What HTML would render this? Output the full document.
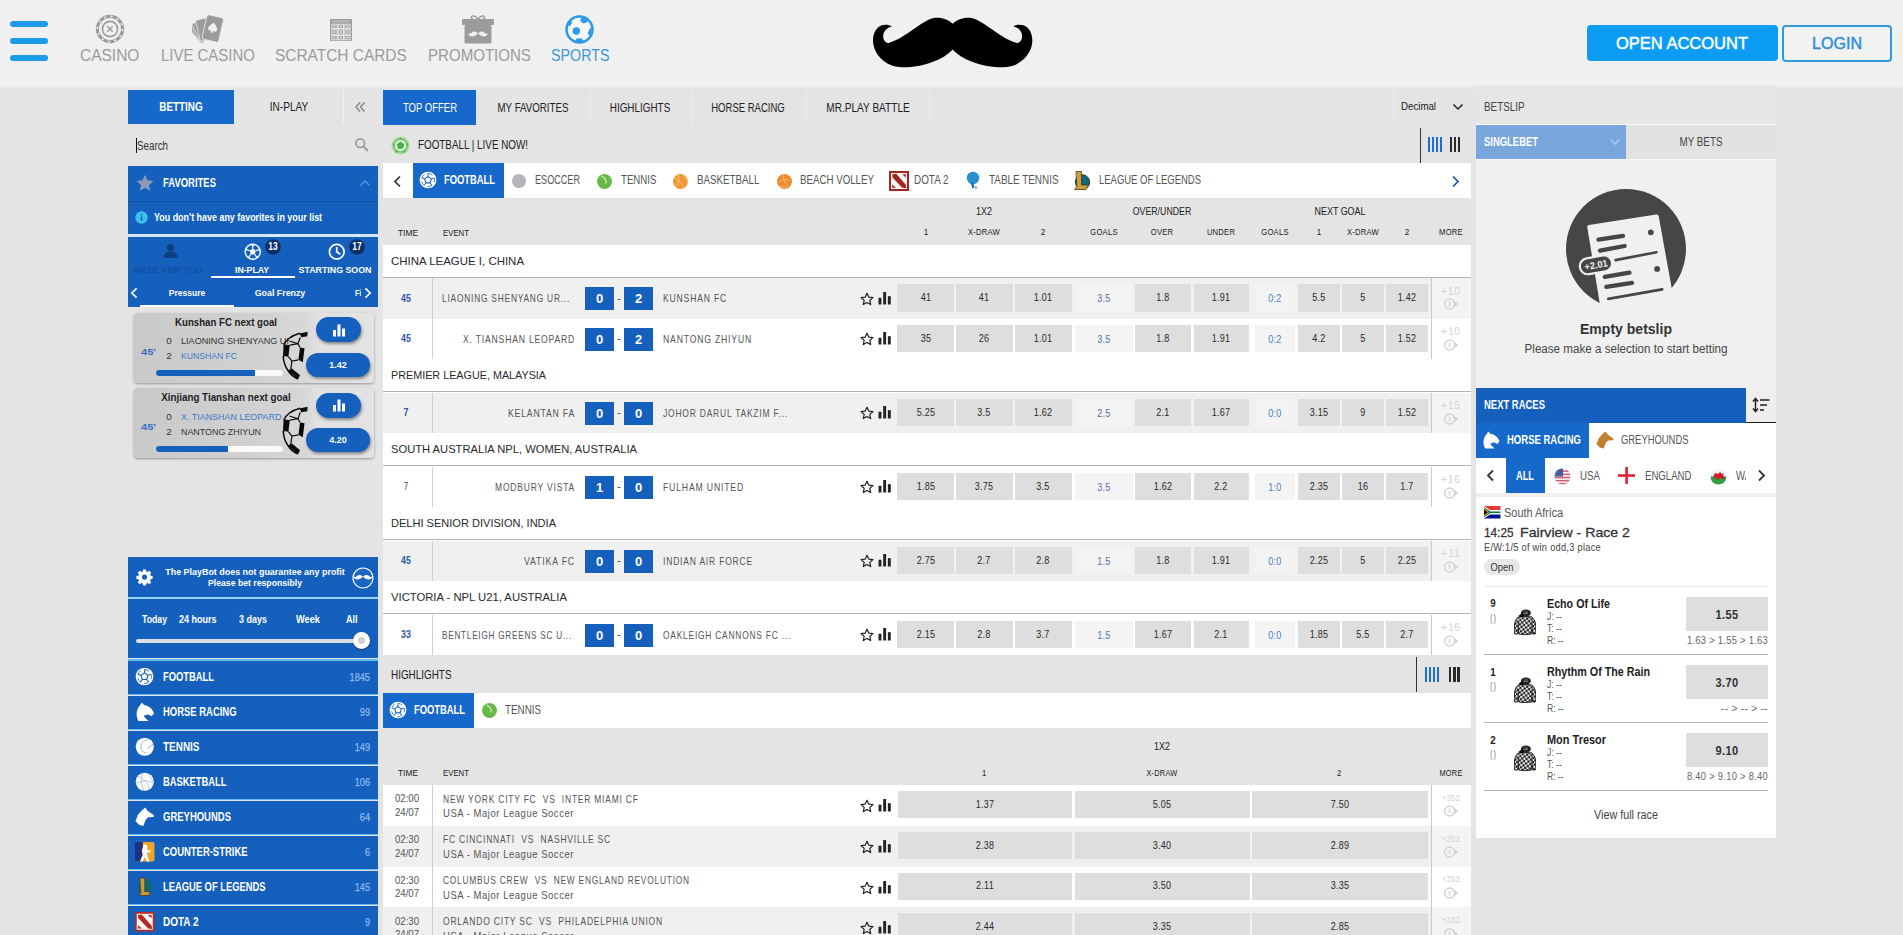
<!DOCTYPE html>
<html lang="en"><head><meta charset="utf-8"><title>mr.play Sports</title>
<style>
html,body{margin:0;padding:0}
body{width:1903px;height:935px;overflow:hidden;position:relative;background:#e4e4e4;font-family:"Liberation Sans",sans-serif;}
div,span,svg{position:absolute;box-sizing:border-box}
span{white-space:pre}
</style></head><body>

<div style="left:0;top:84px;width:1903px;height:4.500px;background:linear-gradient(#f0f0f0 15%,#e4e4e4)"></div><div id="hdr" style="left:0;top:0;width:1903px;height:85px;background:#f0f0f0">
<div style="left:10px;top:20.5px;width:37.5px;height:6.5px;background:#1a9ce9;border-radius:3.5px"></div>
<div style="left:10px;top:37.5px;width:37.5px;height:6.5px;background:#1a9ce9;border-radius:3.5px"></div>
<div style="left:10px;top:54.5px;width:37.5px;height:6.5px;background:#1a9ce9;border-radius:3.5px"></div>
<svg style="left:95px;top:14px;" width="30" height="30" viewBox="0 0 30 30"><circle cx="15" cy="15" r="12.6" fill="none" stroke="#9b9b9b" stroke-width="3.2"/><circle cx="15" cy="15" r="12.6" fill="none" stroke="#f0f0f0" stroke-width="1.6" stroke-dasharray="2.2 4.4"/><circle cx="15" cy="15" r="7.6" fill="none" stroke="#9b9b9b" stroke-width="1.6"/><path d="M12.3 12.3l5.4 5.4M17.7 12.3l-5.4 5.4" stroke="#9b9b9b" stroke-width="1.5"/></svg>
<svg style="left:192px;top:13px;" width="32" height="32" viewBox="0 0 32 32"><g fill="#9b9b9b" stroke="#f0f0f0" stroke-width=".7"><rect x="8.500" y="6" width="13.500" height="20" rx="1.500" transform="rotate(-40 16 27)" opacity=".8"/><rect x="8.500" y="5.500" width="13.500" height="20.500" rx="1.500" transform="rotate(-27 16 27)" opacity=".88"/><rect x="8.500" y="5" width="13.500" height="21" rx="1.500" transform="rotate(-14 16 27)" opacity=".94"/><rect x="12.300" y="3" width="17" height="25" rx="2.200" transform="rotate(13 20.700 15.500)"/></g><path d="M20.700 9.500c2.200 2.600 4.600 4.200 4.600 6.400a2.300 2.300 0 0 1-3.900 1.600l.7 2.300h-2.800l.7-2.300a2.300 2.300 0 0 1-3.900-1.600c0-2.200 2.400-3.800 4.600-6.400z" fill="#f0f0f0" transform="rotate(13 20.700 15.500)"/></svg>
<svg style="left:330px;top:19px;" width="22" height="22" viewBox="0 0 22 22"><rect x="0" y="0" width="22" height="22" fill="#9b9b9b"/><rect x="1.5" y="1.2" width="19" height="2.2" fill="#b9b9b9"/><rect x="1.8" y="5.2" width="5.3" height="4.4" fill="none" stroke="#f0f0f0" stroke-width=".9"/><circle cx="4.45" cy="7.4" r="1.1" fill="#e3e3e3"/><rect x="8.3" y="5.2" width="5.3" height="4.4" fill="none" stroke="#f0f0f0" stroke-width=".9"/><circle cx="10.95" cy="7.4" r="1.1" fill="#e3e3e3"/><rect x="14.8" y="5.2" width="5.3" height="4.4" fill="none" stroke="#f0f0f0" stroke-width=".9"/><circle cx="17.45" cy="7.4" r="1.1" fill="#e3e3e3"/><rect x="1.8" y="10.8" width="5.3" height="4.4" fill="none" stroke="#f0f0f0" stroke-width=".9"/><circle cx="4.45" cy="13.0" r="1.1" fill="#e3e3e3"/><rect x="8.3" y="10.8" width="5.3" height="4.4" fill="none" stroke="#f0f0f0" stroke-width=".9"/><circle cx="10.95" cy="13.0" r="1.1" fill="#e3e3e3"/><rect x="14.8" y="10.8" width="5.3" height="4.4" fill="none" stroke="#f0f0f0" stroke-width=".9"/><circle cx="17.45" cy="13.0" r="1.1" fill="#e3e3e3"/><rect x="1.8" y="16.4" width="5.3" height="4.4" fill="none" stroke="#f0f0f0" stroke-width=".9"/><circle cx="4.45" cy="18.6" r="1.1" fill="#e3e3e3"/><rect x="8.3" y="16.4" width="5.3" height="4.4" fill="none" stroke="#f0f0f0" stroke-width=".9"/><circle cx="10.95" cy="18.6" r="1.1" fill="#e3e3e3"/><rect x="14.8" y="16.4" width="5.3" height="4.4" fill="none" stroke="#f0f0f0" stroke-width=".9"/><circle cx="17.45" cy="18.6" r="1.1" fill="#e3e3e3"/></svg>
<svg style="left:461px;top:14px;" width="34" height="31" viewBox="0 0 34 31"><path d="M17 5.5c-2-4.5-7.5-4.5-6.5-1.5 .6 1.8 4 2 6.5 1.5zM17 5.5c2-4.5 7.5-4.5 6.5-1.500-.6 1.800-4 2-6.500 1.500z" fill="none" stroke="#9b9b9b" stroke-width="1.4"/><rect x="1" y="5" width="32" height="6" rx="1" fill="#9b9b9b"/><rect x="3.500" y="11" width="27" height="18.500" rx="1.500" fill="#9b9b9b"/><path d="M17 19.5c-2.500-2.600-5-2.400-6.500-.8-1.300 1.400-2.800 1.400-3.500 .2 .3 2.800 3 4 5.500 3.300 2-.6 3.400-1.500 4.500-2.700 1.100 1.200 2.500 2.100 4.500 2.700 2.500 .7 5.200-.5 5.500-3.300-.7 1.200-2.200 1.200-3.500-.2-1.500-1.600-4-1.800-6.500 .8z" fill="#f0f0f0"/></svg>
<svg style="left:564px;top:14px;" width="31" height="31" viewBox="0 0 31 31"><circle cx="15.5" cy="15.5" r="13" fill="#f4f8fc" stroke="#2e9ae6" stroke-width="2.600"/><circle cx="12.300" cy="17" r="3.700" fill="#2e9ae6"/><path d="M17.500 3.500l5 1.500 1 3.200-4.200 1.200-3.300-2.700zM26.500 13.500l1.800 4.500-2.300 4.300-2.300-3.200zM11 27l4.500 1.200 4-1.500-2-2.500-5 .3zM3.200 10.500l2.800-4 2.300 1.500-2.300 4.200z" fill="#2e9ae6"/></svg>
<span style="left:80px;top:46.38px;font-size:16.3px;line-height:19.56px;color:#9b9b9b;transform-origin:0 50%;transform:scaleX(0.952);">CASINO</span>
<span style="left:160.5px;top:46.38px;font-size:16.3px;line-height:19.56px;color:#9b9b9b;transform-origin:0 50%;transform:scaleX(0.918);">LIVE CASINO</span>
<span style="left:275px;top:46.38px;font-size:16.3px;line-height:19.56px;color:#9b9b9b;transform-origin:0 50%;transform:scaleX(0.948);">SCRATCH CARDS</span>
<span style="left:427.5px;top:46.38px;font-size:16.3px;line-height:19.56px;color:#9b9b9b;transform-origin:0 50%;transform:scaleX(0.925);">PROMOTIONS</span>
<span style="left:551px;top:46.38px;font-size:16.3px;line-height:19.56px;color:#3b97d6;transform-origin:0 50%;transform:scaleX(0.877);">SPORTS</span>
<svg style="left:860px;top:8px;" width="188" height="70" viewBox="0 0 1903 709"><path fill="#000" d="M938 160C880 110 820 98 770 100C640 105 480 300 290 355C220 350 200 220 325 185C290 165 250 165 220 175C150 200 120 290 135 370C160 500 280 600 430 600C650 600 850 520 938 420C1026 520 1226 600 1446 600C1596 600 1716 500 1741 370C1756 290 1726 200 1656 175C1626 165 1586 165 1551 185C1676 220 1656 350 1586 355C1396 300 1236 105 1106 100C1056 98 996 110 938 160Z"/></svg>
<div style="left:1587px;top:25px;width:190.5px;height:36px;background:#0c9cf4;border-radius:4px"></div>
<span style="left:1682px;top:34.06px;font-size:16px;line-height:19.2px;color:#fff;transform-origin:50% 50%;transform:translateX(-50%) scaleX(1.031);-webkit-text-stroke:.45px #fff;">OPEN ACCOUNT</span>
<div style="left:1782px;top:24.5px;width:109.5px;height:37px;border:2px solid #3599de;border-radius:4px;background:#f2f2f2"></div>
<span style="left:1836.5px;top:34.06px;font-size:16px;line-height:19.2px;color:#2f8fd6;transform-origin:50% 50%;transform:translateX(-50%) scaleX(1.004);-webkit-text-stroke:.45px #2f8fd6;">LOGIN</span>
</div>
<div style="left:128px;top:90px;width:106px;height:33.5px;background:#1668cb;"></div>
<span style="left:181px;top:99.33px;font-size:13px;line-height:15.6px;color:#fff;font-weight:bold;transform-origin:50% 50%;transform:translateX(-50%) scaleX(0.762);">BETTING</span>
<span style="left:289px;top:98.83px;font-size:13px;line-height:15.6px;color:#222;transform-origin:50% 50%;transform:translateX(-50%) scaleX(0.776);">IN-PLAY</span>
<div style="left:343px;top:90px;width:1px;height:34px;background:#f2f2f2;"></div>
<svg style="left:354px;top:101px;" width="12" height="12" viewBox="0 0 12 12"><path d="M6 1.500L2 6l4 4.500M10.500 1.500L6.500 6l4 4.500" fill="none" stroke="#8a8a8a" stroke-width="1.500"/></svg>
<div style="left:136px;top:138px;width:1px;height:15px;background:#111;"></div>
<span style="left:136.5px;top:138.62px;font-size:12.5px;line-height:15.0px;color:#333;transform-origin:0 50%;transform:scaleX(0.783);">Search</span>
<svg style="left:354px;top:137px;" width="16" height="16" viewBox="0 0 16 16"><circle cx="6.200" cy="6.200" r="4.300" fill="none" stroke="#9a9a9a" stroke-width="1.700"/><path d="M9.400 9.400L14 14" stroke="#9a9a9a" stroke-width="2"/></svg>
<div style="left:126.5px;top:166px;width:1.5px;height:141px;background:#d8ebfd;"></div>
<div style="left:126.5px;top:557px;width:1.5px;height:378px;background:#d8ebfd;"></div>
<div style="left:128px;top:166px;width:250px;height:34.5px;background:#1560bd;"></div>
<svg style="left:136px;top:173.5px;" width="18" height="18" viewBox="0 0 18 18"><path d="M9 .8l2.500 5.400 5.900.7-4.400 4 1.200 5.800L9 13.800l-5.200 2.900L5 10.900l-4.400-4 5.900-.7z" fill="#8c9bb3"/></svg>
<span style="left:162.5px;top:175.33px;font-size:13px;line-height:15.6px;color:#fff;font-weight:bold;transform-origin:0 50%;transform:scaleX(0.729);">FAVORITES</span>
<svg style="left:359px;top:179px;" width="12" height="8" viewBox="0 0 12 8"><path d="M1.500 6.500L6 2l4.500 4.500" fill="none" stroke="#4f8fe0" stroke-width="1.600"/></svg>
<div style="left:128px;top:200.5px;width:250px;height:1px;background:#0f4f9e;"></div>
<div style="left:128px;top:201.5px;width:250px;height:32.5px;background:#1560bd;"></div>
<svg style="left:135px;top:211px;" width="13" height="13" viewBox="0 0 13 13"><circle cx="6.500" cy="6.500" r="6.200" fill="#3cc0ee"/><rect x="5.800" y="5.500" width="1.500" height="4.500" fill="#1560bd"/><rect x="5.800" y="3" width="1.500" height="1.500" fill="#1560bd"/></svg>
<span style="left:154px;top:210.72px;font-size:11.5px;line-height:13.8px;color:#fff;font-weight:bold;transform-origin:0 50%;transform:scaleX(0.776);">You don't have any favorites in your list</span>
<div style="left:128px;top:234px;width:250px;height:3px;background:#d6e8fa;"></div>
<div style="left:128px;top:237px;width:250px;height:69.7px;background:#1560bd;"></div>
<svg style="left:161.5px;top:243px;" width="17" height="16" viewBox="0 0 17 16"><circle cx="8.500" cy="4.500" r="3.600" fill="#0e3f80"/><path d="M1.500 15c0-5 3.500-6.500 7-6.500s7 1.500 7 6.500z" fill="#0e3f80"/></svg>
<span style="left:168px;top:263.89px;font-size:9.5px;line-height:11.4px;color:#124f9f;font-weight:bold;transform-origin:50% 50%;transform:translateX(-50%) scaleX(0.922);">MADE FOR YOU</span>
<svg style="left:244px;top:242.5px;" width="17.5" height="17.5" viewBox="0 0 20 20"><circle cx="10" cy="10" r="8.600" fill="none" stroke="#fff" stroke-width="1.5"/><path d="M10 6.300l3.500 2.600-1.300 4.100H7.800L6.500 8.900z" fill="#fff"/><path d="M10 6.300V2.500M13.500 8.900l3.700-1.300M12.200 13l2.400 3.200M7.800 13l-2.400 3.200M6.500 8.900L2.800 7.600" stroke="#fff" stroke-width="1.300"/><path d="M7.500 1.800l2.500 1.300 2.500-1.300M17.600 5.200l-.4 2.600 2 2M16.800 16l-2.500 .3-1.300 2.200M7 18.500l-1.300-2.200-2.500-.3M.8 9.800l2-2-.4-2.600" fill="none" stroke="#fff" stroke-width="1.100"/></svg>
<svg style="left:265px;top:238.5px;" width="16" height="16" viewBox="0 0 16 16"><circle cx="8" cy="8" r="7.800" fill="#0b2f6b"/></svg>
<span style="left:273px;top:240.6px;font-size:10px;line-height:12.0px;color:#fff;font-weight:bold;transform-origin:50% 50%;transform:translateX(-50%) scaleX(0.854);">13</span>
<span style="left:252px;top:264.19px;font-size:9.5px;line-height:11.4px;color:#fff;font-weight:bold;transform-origin:50% 50%;transform:translateX(-50%) scaleX(0.916);">IN-PLAY</span>
<div style="left:211px;top:275.5px;width:83.5px;height:2px;background:#fff;"></div>
<svg style="left:328px;top:242.5px;" width="17.5" height="17.5" viewBox="0 0 20 20"><circle cx="10" cy="10" r="8.400" fill="none" stroke="#fff" stroke-width="1.900"/><path d="M10 4.500V10l4 2.800" fill="none" stroke="#fff" stroke-width="1.900"/></svg>
<svg style="left:348.5px;top:238.5px;" width="16" height="16" viewBox="0 0 16 16"><circle cx="8" cy="8" r="7.800" fill="#0b2f6b"/></svg>
<span style="left:356.5px;top:240.6px;font-size:10px;line-height:12.0px;color:#fff;font-weight:bold;transform-origin:50% 50%;transform:translateX(-50%) scaleX(0.854);">17</span>
<span style="left:335px;top:264.19px;font-size:9.5px;line-height:11.4px;color:#fff;font-weight:bold;transform-origin:50% 50%;transform:translateX(-50%) scaleX(0.93);">STARTING SOON</span>
<svg style="left:130px;top:286.5px;" width="8" height="12" viewBox="0 0 9 14"><path d="M7.500 1.500L2 7l5.500 5.500" fill="none" stroke="#fff" stroke-width="2"/></svg>
<span style="left:186.5px;top:287.19px;font-size:9.5px;line-height:11.4px;color:#fff;font-weight:bold;transform-origin:50% 50%;transform:translateX(-50%) scaleX(0.898);">Pressure</span>
<span style="left:279.5px;top:287.19px;font-size:9.5px;line-height:11.4px;color:#fff;font-weight:bold;transform-origin:50% 50%;transform:translateX(-50%) scaleX(0.929);">Goal Frenzy</span>
<span style="left:355px;top:287.19px;font-size:9.5px;line-height:11.4px;color:#fff;font-weight:bold;transform-origin:0 50%;transform:scaleX(0.77);">Fi</span>
<div style="left:361px;top:285px;width:6px;height:15px;background:#1560bd;"></div>
<svg style="left:364px;top:286.5px;" width="8" height="12" viewBox="0 0 9 14"><path d="M1.500 1.500L7 7l-5.500 5.500" fill="none" stroke="#fff" stroke-width="2"/></svg>
<div style="left:140px;top:304.5px;width:93.5px;height:2px;background:#fff;"></div>
<div style="left:134px;top:312.5px;width:240px;height:70px;border-radius:4px;background:linear-gradient(90deg,#c9c9c9 0%,#d2d2d2 55%,#d8d8d8 72%,#e2e2e2 77%,#e3e3e3 100%);box-shadow:0 1px 2.500px rgba(0,0,0,.35)"></div>
<span style="left:226px;top:315.71px;font-size:11.5px;line-height:13.8px;color:#1e1e1e;font-weight:bold;transform-origin:50% 50%;transform:translateX(-50%) scaleX(0.84);">Kunshan FC next goal</span>
<span style="left:141px;top:345.89px;font-size:9.5px;line-height:11.4px;color:#3a6cc0;font-weight:bold;transform-origin:0 50%;transform:scaleX(1.169);">45'</span>
<span style="left:168.5px;top:336.31px;font-size:9.3px;line-height:11.16px;color:#333;transform-origin:50% 50%;transform:translateX(-50%) scaleX(1.063);">0</span>
<span style="left:168.5px;top:351.31px;font-size:9.3px;line-height:11.16px;color:#333;transform-origin:50% 50%;transform:translateX(-50%) scaleX(1.063);">2</span>
<div style="left:181px;top:333.5px;width:108px;height:32px;overflow:hidden"><span style="left:0px;top:2.81px;font-size:9.3px;line-height:11.16px;color:#333;transform-origin:0 50%;transform:scaleX(0.978);">LIAONING SHENYANG UR</span><span style="left:0px;top:17.81px;font-size:9.3px;line-height:11.16px;color:#3b78c9;transform-origin:0 50%;transform:scaleX(0.926);">KUNSHAN FC</span></div>
<div style="left:156px;top:370.0px;width:126.500px;height:6px;border-radius:3px;background:#fafafa;overflow:hidden"><div style="left:0;top:0;height:6px;width:98.5px;background:#1560bd"></div></div>
<svg style="left:282px;top:329.5px;" width="28" height="50" viewBox="0 0 28 50"><path d="M17.400 3.500L25.600 1.700 25.300 6.200 19.500 7.200zM1.600 14.400L7.800 15.100 6.400 26.700 1 26.100zM5.800 40.400L9.900 38.400 18.100 45.200 16 49.300zM18 17.500L22.500 18.200 20.800 32.200 16.400 29.800z" fill="#0a0a0a"/><path d="M18 3.300C10 5.500 4 10 1.800 15M1.200 26C1.500 31.500 3 36.500 6 40.500M16 49C12 47.500 8.500 44.500 6 40.500" fill="none" stroke="#0a0a0a" stroke-width="1.500"/><path d="M7.800 15.100L16 13.700 18 17.500M16.400 29.800L9.900 31.200 6.400 26.700M7.500 11L16 13.700 18.300 7.200M9.900 31.200L8.800 39" fill="none" stroke="#0a0a0a" stroke-width="1.200"/></svg>
<div style="left:316.2px;top:317.0px;width:45px;height:25px;border-radius:12.500px;background:#1560bd;box-shadow:1px 2px 3px rgba(0,0,0,.4)"></div>
<svg style="left:331.7px;top:322.5px;" width="14" height="14" viewBox="0 0 14 14"><rect x="1" y="7" width="3" height="6.500" fill="#fff"/><rect x="5.500" y="1.500" width="3" height="12" fill="#fff"/><rect x="10" y="5.500" width="3" height="8" fill="#fff"/></svg>
<div style="left:306.2px;top:352.5px;width:63.500px;height:24px;border-radius:12px;background:#1560bd;box-shadow:1px 2px 3px rgba(0,0,0,.4)"></div>
<span style="left:337.7px;top:358.89px;font-size:9.5px;line-height:11.4px;color:#fff;font-weight:bold;transform-origin:50% 50%;transform:translateX(-50%) scaleX(0.946);">1.42</span>
<div style="left:134px;top:388px;width:240px;height:70px;border-radius:4px;background:linear-gradient(90deg,#c9c9c9 0%,#d2d2d2 55%,#d8d8d8 72%,#e2e2e2 77%,#e3e3e3 100%);box-shadow:0 1px 2.500px rgba(0,0,0,.35)"></div>
<span style="left:226px;top:391.21px;font-size:11.5px;line-height:13.8px;color:#1e1e1e;font-weight:bold;transform-origin:50% 50%;transform:translateX(-50%) scaleX(0.853);">Xinjiang Tianshan next goal</span>
<span style="left:141px;top:421.39px;font-size:9.5px;line-height:11.4px;color:#3a6cc0;font-weight:bold;transform-origin:0 50%;transform:scaleX(1.169);">45'</span>
<span style="left:168.5px;top:411.81px;font-size:9.3px;line-height:11.16px;color:#333;transform-origin:50% 50%;transform:translateX(-50%) scaleX(1.063);">0</span>
<span style="left:168.5px;top:426.81px;font-size:9.3px;line-height:11.16px;color:#333;transform-origin:50% 50%;transform:translateX(-50%) scaleX(1.063);">2</span>
<div style="left:181px;top:409px;width:108px;height:32px;overflow:hidden"><span style="left:0px;top:2.81px;font-size:9.3px;line-height:11.16px;color:#3b78c9;transform-origin:0 50%;transform:scaleX(0.961);">X. TIANSHAN LEOPARD</span><span style="left:0px;top:17.81px;font-size:9.3px;line-height:11.16px;color:#333;transform-origin:0 50%;transform:scaleX(0.958);">NANTONG ZHIYUN</span></div>
<div style="left:156px;top:445.5px;width:126.500px;height:6px;border-radius:3px;background:#fafafa;overflow:hidden"><div style="left:0;top:0;height:6px;width:72px;background:#1560bd"></div></div>
<svg style="left:282px;top:405px;" width="28" height="50" viewBox="0 0 28 50"><path d="M17.400 3.500L25.600 1.700 25.300 6.200 19.500 7.200zM1.600 14.400L7.800 15.100 6.400 26.700 1 26.100zM5.800 40.400L9.900 38.400 18.100 45.200 16 49.300zM18 17.500L22.500 18.200 20.800 32.200 16.400 29.800z" fill="#0a0a0a"/><path d="M18 3.300C10 5.500 4 10 1.800 15M1.200 26C1.500 31.500 3 36.500 6 40.500M16 49C12 47.500 8.500 44.500 6 40.500" fill="none" stroke="#0a0a0a" stroke-width="1.500"/><path d="M7.800 15.100L16 13.700 18 17.500M16.400 29.800L9.900 31.200 6.400 26.700M7.500 11L16 13.700 18.300 7.200M9.900 31.200L8.800 39" fill="none" stroke="#0a0a0a" stroke-width="1.200"/></svg>
<div style="left:316.2px;top:392.5px;width:45px;height:25px;border-radius:12.500px;background:#1560bd;box-shadow:1px 2px 3px rgba(0,0,0,.4)"></div>
<svg style="left:331.7px;top:398px;" width="14" height="14" viewBox="0 0 14 14"><rect x="1" y="7" width="3" height="6.500" fill="#fff"/><rect x="5.500" y="1.500" width="3" height="12" fill="#fff"/><rect x="10" y="5.500" width="3" height="8" fill="#fff"/></svg>
<div style="left:306.2px;top:428px;width:63.500px;height:24px;border-radius:12px;background:#1560bd;box-shadow:1px 2px 3px rgba(0,0,0,.4)"></div>
<span style="left:337.7px;top:434.39px;font-size:9.5px;line-height:11.4px;color:#fff;font-weight:bold;transform-origin:50% 50%;transform:translateX(-50%) scaleX(0.946);">4.20</span>
<div style="left:128px;top:557px;width:250px;height:39.5px;background:#1560bd;"></div>
<svg style="left:135.5px;top:569px;" width="17" height="17" viewBox="-1 -.5 22 22"><path fill="#fff" d="M8.200 0h3.600l.5 2.600 1.700.7 2.200-1.500 2.500 2.500-1.500 2.200.7 1.700 2.600.5v3.600l-2.600.5-.7 1.700 1.500 2.200-2.500 2.500-2.200-1.500-1.700.7-.5 2.600H8.200l-.5-2.600-1.700-.7-2.200 1.500-2.500-2.500 1.500-2.200-.7-1.700L-.5 12.300V8.700l2.600-.5.7-1.700-1.500-2.200 2.500-2.500 2.200 1.500 1.700-.7zM10 6.700a3.300 3.300 0 1 0 0 6.600 3.300 3.300 0 0 0 0-6.600z"/></svg>
<span style="left:254.5px;top:566.51px;font-size:9.3px;line-height:11.16px;color:#fff;font-weight:bold;transform-origin:50% 50%;transform:translateX(-50%) scaleX(0.96);">The PlayBot does not guarantee any profit</span>
<span style="left:254.5px;top:578.01px;font-size:9.3px;line-height:11.16px;color:#fff;font-weight:bold;transform-origin:50% 50%;transform:translateX(-50%) scaleX(0.933);">Please bet responsibly</span>
<svg style="left:352px;top:566.5px;" width="22" height="22" viewBox="0 0 22 22"><circle cx="11" cy="11" r="10" fill="#1b66c4" stroke="#fff" stroke-width="1.200"/><path d="M11 9.800c-2.200-2.300-4.600-2-6-.7-1.200 1.200-2.600 1.200-3.300.1.300 2.600 2.800 3.700 5.100 3 1.800-.5 3.200-1.400 4.200-2.500 1 1.100 2.400 2 4.200 2.500 2.300.7 4.800-.4 5.100-3-.7 1.100-2.100 1.100-3.300-.1-1.400-1.300-3.800-1.600-6 .7z" fill="#fff"/></svg>
<div style="left:128px;top:596.5px;width:250px;height:2.2px;background:#93d2fc;"></div>
<div style="left:128px;top:598.7px;width:250px;height:59.5px;background:#1560bd;"></div>
<span style="left:142px;top:613.3px;font-size:10.5px;line-height:12.6px;color:#fff;font-weight:bold;transform-origin:0 50%;transform:scaleX(0.829);">Today</span>
<span style="left:179px;top:613.3px;font-size:10.5px;line-height:12.6px;color:#fff;font-weight:bold;transform-origin:0 50%;transform:scaleX(0.857);">24 hours</span>
<span style="left:239px;top:613.3px;font-size:10.5px;line-height:12.6px;color:#fff;font-weight:bold;transform-origin:0 50%;transform:scaleX(0.857);">3 days</span>
<span style="left:296px;top:613.3px;font-size:10.5px;line-height:12.6px;color:#fff;font-weight:bold;transform-origin:0 50%;transform:scaleX(0.881);">Week</span>
<span style="left:345.5px;top:613.3px;font-size:10.5px;line-height:12.6px;color:#fff;font-weight:bold;transform-origin:0 50%;transform:scaleX(0.857);">All</span>
<div style="left:136px;top:638.5px;width:224px;height:4.5px;background:#dbe0e8;border-radius:2px"></div>
<div style="left:353px;top:632px;width:17px;height:17px;border-radius:9px;background:#fff;box-shadow:0 1px 2px rgba(0,0,0,.4)"></div>
<div style="left:358px;top:637px;width:7px;height:7px;border-radius:4px;background:#d0d0d0"></div>
<div style="left:128px;top:658.5px;width:250px;height:2px;background:#62baf9;"></div>
<div style="left:128px;top:660.5px;width:250px;height:33.3px;background:#1560bd;"></div>
<div style="left:128px;top:693.8px;width:250px;height:1.7px;background:#62baf9;"></div>
<svg style="left:135.3px;top:667.3px;" width="19" height="19" viewBox="0 0 20 20"><circle cx="10" cy="10" r="9.300" fill="#fff"/><circle cx="10" cy="10" r="7.300" fill="none" stroke="#1560bd" stroke-width=".9" stroke-dasharray="5.2 4" stroke-dashoffset="2.6"/><polygon points="10.00,6.10 13.71,8.79 12.29,13.16 7.71,13.16 6.29,8.79" fill="#fff" stroke="#1560bd" stroke-width="1.200"/><path d="M10.00 6.10L10.00 2.70M13.71 8.79L16.94 7.74M12.29 13.16L14.29 15.91M7.71 13.16L5.71 15.91M6.29 8.79L3.06 7.74" stroke="#1560bd" stroke-width="1.100"/></svg>
<span style="left:162.5px;top:669.62px;font-size:12.5px;line-height:15.0px;color:#fff;font-weight:bold;transform-origin:0 50%;transform:scaleX(0.75);">FOOTBALL</span>
<span style="left:369.5px;top:671.22px;font-size:11.5px;line-height:13.8px;color:#8ebaf2;transform-origin:100% 50%;transform:translateX(-100%) scaleX(0.8);-webkit-text-stroke:.25px #8ebaf2;">1845</span>
<div style="left:128px;top:695.5px;width:250px;height:33.3px;background:#1560bd;"></div>
<div style="left:128px;top:728.8px;width:250px;height:1.7px;background:#62baf9;"></div>
<svg style="left:135.3px;top:702.3px;" width="19.5" height="19.5" viewBox="0 0 20 20"><path d="M7 .5L9.200 3C14 3.500 18 7 19.500 11.500L17 14.500 13 12.500C11.500 13.500 10 14 9 14 10 16 12 17.500 14 19.500H3.500C.8 14 1 8 5 3.500z" fill="#fff"/></svg>
<span style="left:162.5px;top:704.62px;font-size:12.5px;line-height:15.0px;color:#fff;font-weight:bold;transform-origin:0 50%;transform:scaleX(0.756);">HORSE RACING</span>
<span style="left:369.5px;top:706.22px;font-size:11.5px;line-height:13.8px;color:#8ebaf2;transform-origin:100% 50%;transform:translateX(-100%) scaleX(0.8);-webkit-text-stroke:.25px #8ebaf2;">99</span>
<div style="left:128px;top:730.5px;width:250px;height:33.3px;background:#1560bd;"></div>
<div style="left:128px;top:763.8px;width:250px;height:1.7px;background:#62baf9;"></div>
<svg style="left:135.3px;top:737.3px;" width="19.5" height="19.5" viewBox="0 0 20 20"><circle cx="10" cy="10" r="9.300" fill="#fff"/><path d="M13.500 2.500c-5 .5-8 4-7.500 8.500.4 3 2.500 5 5.500 5.500M19 8c-3 .2-5 2-5.500 4.500" fill="none" stroke="#8fb2e2" stroke-width="1"/></svg>
<span style="left:162.5px;top:739.62px;font-size:12.5px;line-height:15.0px;color:#fff;font-weight:bold;transform-origin:0 50%;transform:scaleX(0.796);">TENNIS</span>
<span style="left:369.5px;top:741.22px;font-size:11.5px;line-height:13.8px;color:#8ebaf2;transform-origin:100% 50%;transform:translateX(-100%) scaleX(0.8);-webkit-text-stroke:.25px #8ebaf2;">149</span>
<div style="left:128px;top:765.5px;width:250px;height:33.3px;background:#1560bd;"></div>
<div style="left:128px;top:798.8px;width:250px;height:1.7px;background:#62baf9;"></div>
<svg style="left:135.3px;top:772.3px;" width="19.5" height="19.5" viewBox="0 0 20 20"><circle cx="10" cy="10" r="9.300" fill="#fff"/><path d="M3 4.500c5 1 10 5 11.500 13M8 1.200c-2 5-2 11 1 17.500M1.500 12c4-3 11-4 17-1M13 1.500c2 2 4 5 5 8" fill="none" stroke="#9dbbe4" stroke-width=".8"/></svg>
<span style="left:162.5px;top:774.62px;font-size:12.5px;line-height:15.0px;color:#fff;font-weight:bold;transform-origin:0 50%;transform:scaleX(0.75);">BASKETBALL</span>
<span style="left:369.5px;top:776.22px;font-size:11.5px;line-height:13.8px;color:#8ebaf2;transform-origin:100% 50%;transform:translateX(-100%) scaleX(0.8);-webkit-text-stroke:.25px #8ebaf2;">106</span>
<div style="left:128px;top:800.5px;width:250px;height:33.3px;background:#1560bd;"></div>
<div style="left:128px;top:833.8px;width:250px;height:1.7px;background:#62baf9;"></div>
<svg style="left:135.3px;top:807.3px;" width="19.5" height="19.5" viewBox="0 0 20 20"><path d="M10.500 .5L13 4l6.500 4.500-.5 1.700-5.500.3L11 13 8.500 19.500l-4-1-4-4L3 8l4-4.500z" fill="#fff"/></svg>
<span style="left:162.5px;top:809.62px;font-size:12.5px;line-height:15.0px;color:#fff;font-weight:bold;transform-origin:0 50%;transform:scaleX(0.759);">GREYHOUNDS</span>
<span style="left:369.5px;top:811.22px;font-size:11.5px;line-height:13.8px;color:#8ebaf2;transform-origin:100% 50%;transform:translateX(-100%) scaleX(0.8);-webkit-text-stroke:.25px #8ebaf2;">64</span>
<div style="left:128px;top:835.5px;width:250px;height:33.3px;background:#1560bd;"></div>
<div style="left:128px;top:868.8px;width:250px;height:1.7px;background:#62baf9;"></div>
<svg style="left:135.3px;top:842.3px;" width="19.5" height="19.5" viewBox="0 0 20 20"><rect x="0" y="0" width="20" height="20" rx="2" fill="#f0a428"/><rect x="0" y="0" width="8" height="20" fill="#1f2f80"/><path d="M9 2l3 1 1 3-1 2 4 1v1.500l-4 .5 1 4 2 5h-3l-2-5-2 5H5l3-7-1-4 1-3z" fill="#fff"/></svg>
<span style="left:162.5px;top:844.62px;font-size:12.5px;line-height:15.0px;color:#fff;font-weight:bold;transform-origin:0 50%;transform:scaleX(0.756);">COUNTER-STRIKE</span>
<span style="left:369.5px;top:846.22px;font-size:11.5px;line-height:13.8px;color:#8ebaf2;transform-origin:100% 50%;transform:translateX(-100%) scaleX(0.8);-webkit-text-stroke:.25px #8ebaf2;">6</span>
<div style="left:128px;top:870.5px;width:250px;height:33.3px;background:#1560bd;"></div>
<div style="left:128px;top:903.8px;width:250px;height:1.7px;background:#62baf9;"></div>
<svg style="left:135.3px;top:877.3px;" width="19.5" height="19.5" viewBox="0 0 20 20"><rect x="2" y="2" width="16" height="16" rx="8" fill="#0e6a7a"/><path d="M5 1h5v14h6l-2 4H4l2-3z" fill="#c79a3a" stroke="#3a2a0a" stroke-width=".6"/></svg>
<span style="left:162.5px;top:879.62px;font-size:12.5px;line-height:15.0px;color:#fff;font-weight:bold;transform-origin:0 50%;transform:scaleX(0.749);">LEAGUE OF LEGENDS</span>
<span style="left:369.5px;top:881.22px;font-size:11.5px;line-height:13.8px;color:#8ebaf2;transform-origin:100% 50%;transform:translateX(-100%) scaleX(0.8);-webkit-text-stroke:.25px #8ebaf2;">145</span>
<div style="left:128px;top:905.5px;width:250px;height:33.3px;background:#1560bd;"></div>
<svg style="left:135.3px;top:912.3px;" width="19.5" height="19.5" viewBox="0 0 20 20"><rect x="0" y="0" width="20" height="20" fill="#b62a24"/><rect x="1.800" y="1.800" width="16.400" height="16.400" fill="#f3f3f3"/><path d="M3 3l4-.5L17 14l.5 3.500-4-.5L3.500 6.500z" fill="#b62a24"/><path d="M13 3l4 0v3.500zM3 13.500l4 3.500H3z" fill="#b62a24"/></svg>
<span style="left:162.5px;top:914.62px;font-size:12.5px;line-height:15.0px;color:#fff;font-weight:bold;transform-origin:0 50%;transform:scaleX(0.799);">DOTA 2</span>
<span style="left:369.5px;top:916.22px;font-size:11.5px;line-height:13.8px;color:#8ebaf2;transform-origin:100% 50%;transform:translateX(-100%) scaleX(0.8);-webkit-text-stroke:.25px #8ebaf2;">9</span>
<div style="left:383px;top:90px;width:93px;height:35px;background:#1668cb;"></div>
<span style="left:430px;top:99.83px;font-size:13px;line-height:15.6px;color:#fff;transform-origin:50% 50%;transform:translateX(-50%) scaleX(0.731);">TOP OFFER</span>
<span style="left:533px;top:99.83px;font-size:13px;line-height:15.6px;color:#222;transform-origin:50% 50%;transform:translateX(-50%) scaleX(0.748);">MY FAVORITES</span>
<span style="left:639.5px;top:99.83px;font-size:13px;line-height:15.6px;color:#222;transform-origin:50% 50%;transform:translateX(-50%) scaleX(0.761);">HIGHLIGHTS</span>
<span style="left:747.5px;top:99.83px;font-size:13px;line-height:15.6px;color:#222;transform-origin:50% 50%;transform:translateX(-50%) scaleX(0.732);">HORSE RACING</span>
<span style="left:867.5px;top:99.83px;font-size:13px;line-height:15.6px;color:#222;transform-origin:50% 50%;transform:translateX(-50%) scaleX(0.776);">MR.PLAY BATTLE</span>
<div style="left:589.5px;top:90px;width:1px;height:35px;background:#ededed;"></div>
<div style="left:690.5px;top:90px;width:1px;height:35px;background:#ededed;"></div>
<div style="left:805.5px;top:90px;width:1px;height:35px;background:#ededed;"></div>
<div style="left:929px;top:90px;width:1px;height:35px;background:#ededed;"></div>
<div style="left:1392.5px;top:88px;width:1px;height:36px;background:#ededed;"></div>
<span style="left:1401px;top:100.22px;font-size:11.5px;line-height:13.8px;color:#222;transform-origin:0 50%;transform:scaleX(0.843);">Decimal</span>
<svg style="left:1452px;top:103px;" width="12" height="8" viewBox="0 0 12 8"><path d="M1.500 1.500L6 6l4.500-4.500" fill="none" stroke="#222" stroke-width="1.500"/></svg>
<svg style="left:390.5px;top:135.5px;" width="19" height="19" viewBox="0 0 20 20"><circle cx="10" cy="10" r="9.500" fill="#a9dba2"/><circle cx="10" cy="10" r="6.800" fill="#dcf2d8" stroke="#6cc068" stroke-width="1.500"/><path d="M10 5.800l4 2.900-1.500 4.700h-5L6 8.700z" fill="#4bab4b"/><path d="M10 1.500l2 1.500-2 1.500-2-1.500zM18.300 8l-.5 2.700-2.200-.7.300-2.300zM15 17.500l-2.500-.4.500-2.200 2.500-.2zM5 17.500l-.5-2.800 2.500.2.500 2.200zM1.700 8l2.400-.3.300 2.300-2.200.7z" fill="#5cb85c"/></svg>
<span style="left:418px;top:138.12px;font-size:12.5px;line-height:15.0px;color:#222;transform-origin:0 50%;transform:scaleX(0.788);">FOOTBALL | LIVE NOW!</span>
<div style="left:1420px;top:127.5px;width:1px;height:35px;background:#333;"></div>
<div style="left:1427.5px;top:137.0px;width:2.2px;height:15px;background:#1d6fd2;"></div>
<div style="left:1431.5px;top:137.0px;width:2.2px;height:15px;background:#1d6fd2;"></div>
<div style="left:1435.5px;top:137.0px;width:2.2px;height:15px;background:#1d6fd2;"></div>
<div style="left:1439.5px;top:137.0px;width:2.2px;height:15px;background:#1d6fd2;"></div>
<div style="left:1449.5px;top:137.0px;width:2.4px;height:15px;background:#2a2a2a;"></div>
<div style="left:1453.7px;top:137.0px;width:2.4px;height:15px;background:#2a2a2a;"></div>
<div style="left:1457.9px;top:137.0px;width:2.4px;height:15px;background:#2a2a2a;"></div>
<div style="left:383px;top:163px;width:1088px;height:34.7px;background:#fff;"></div>
<svg style="left:392.5px;top:174.5px;" width="9" height="13" viewBox="0 0 9 13"><path d="M7 1.500L2 6.500l5 5" fill="none" stroke="#333" stroke-width="1.700"/></svg>
<div style="left:413px;top:163px;width:90.7px;height:34.7px;background:#1668cb;"></div>
<svg style="left:418.5px;top:170.8px;" width="18" height="18" viewBox="0 0 20 20"><circle cx="10" cy="10" r="9.300" fill="#fff"/><circle cx="10" cy="10" r="7.300" fill="none" stroke="#1668cb" stroke-width=".9" stroke-dasharray="5.2 4" stroke-dashoffset="2.6"/><polygon points="10.00,6.10 13.71,8.79 12.29,13.16 7.71,13.16 6.29,8.79" fill="#fff" stroke="#1668cb" stroke-width="1.200"/><path d="M10.00 6.10L10.00 2.70M13.71 8.79L16.94 7.74M12.29 13.16L14.29 15.91M7.71 13.16L5.71 15.91M6.29 8.79L3.06 7.74" stroke="#1668cb" stroke-width="1.100"/></svg>
<span style="left:444px;top:173.12px;font-size:12.5px;line-height:15.0px;color:#fff;font-weight:bold;transform-origin:0 50%;transform:scaleX(0.75);">FOOTBALL</span>
<svg style="left:511px;top:173px;" width="16" height="16" viewBox="-8 -8 16 16"><circle cx="0" cy="0" r="7" fill="#b3b5ba"/></svg>
<span style="left:535px;top:173.12px;font-size:12.5px;line-height:15.0px;color:#555;transform-origin:0 50%;transform:scaleX(0.728);">ESOCCER</span>
<svg style="left:595.5px;top:172.5px;" width="17.0" height="17.0" viewBox="-8.5 -8.5 17.0 17.0"><circle cx="0" cy="0" r="7.5" fill="#69b94a"/><path d="M-3 -5.500c3.500 1.500 5 4 4.500 7.500" fill="none" stroke="#d8f0c4" stroke-width="1.300"/></svg>
<span style="left:621px;top:173.12px;font-size:12.5px;line-height:15.0px;color:#555;transform-origin:0 50%;transform:scaleX(0.774);">TENNIS</span>
<svg style="left:672.0px;top:172.5px;" width="17.0" height="17.0" viewBox="-8.5 -8.5 17.0 17.0"><circle cx="0" cy="0" r="7.5" fill="#f09530"/><path d="M-6 -3c4 1 8 4 9 9M-2 -7c1 4 0 9-3 12M2 -7c3 2 5 5 5 8" fill="none" stroke="#f8c98a" stroke-width="1"/></svg>
<span style="left:697px;top:173.12px;font-size:12.5px;line-height:15.0px;color:#555;transform-origin:0 50%;transform:scaleX(0.782);">BASKETBALL</span>
<svg style="left:775.5px;top:172.5px;" width="17.0" height="17.0" viewBox="-8.5 -8.5 17.0 17.0"><circle cx="0" cy="0" r="7.5" fill="#f08a2c"/><path d="M-6 1c3-3 7-4 11-2M-1 -7c-1 4 1 8 5 12M-5 5c3 0 6 1 8 2" fill="none" stroke="#f8c08a" stroke-width="1"/></svg>
<span style="left:800px;top:173.12px;font-size:12.5px;line-height:15.0px;color:#555;transform-origin:0 50%;transform:scaleX(0.777);">BEACH VOLLEY</span>
<svg style="left:889px;top:170.5px;" width="20" height="20" viewBox="0 0 20 20"><rect x="0" y="0" width="20" height="20" fill="#a6231f"/><rect x="2" y="2" width="16" height="16" fill="#f6f6f6"/><path d="M3.200 3.200l4-.5L16.800 13.800l.5 3.500-4-.5L3.700 6.700z" fill="#a6231f"/><path d="M13.200 3.200h3.600v3.300zM3.200 13.500l3.800 3.300H3.200z" fill="#a6231f"/></svg>
<span style="left:914px;top:173.12px;font-size:12.5px;line-height:15.0px;color:#555;transform-origin:0 50%;transform:scaleX(0.793);">DOTA 2</span>
<svg style="left:965px;top:171px;" width="16" height="20" viewBox="0 0 16 20"><circle cx="8" cy="7" r="6.200" fill="#2a8fd0"/><path d="M5.500 11.500l2 6 2-1.200-1.200-5z" fill="#1a6fae"/><circle cx="11" cy="16.500" r="1.200" fill="#6ab8e8"/></svg>
<span style="left:989px;top:173.12px;font-size:12.5px;line-height:15.0px;color:#555;transform-origin:0 50%;transform:scaleX(0.792);">TABLE TENNIS</span>
<svg style="left:1073px;top:170.5px;" width="18" height="20" viewBox="0 0 18 20"><circle cx="9.500" cy="11" r="7.200" fill="#0f6b7c" stroke="#2a1f0a" stroke-width=".8"/><path d="M3 .5h5.500v13.500h7l-2.300 4.500H1.500l2.300-3z" fill="#c9a040" stroke="#3a2a0a" stroke-width=".7"/></svg>
<span style="left:1098.5px;top:173.12px;font-size:12.5px;line-height:15.0px;color:#555;transform-origin:0 50%;transform:scaleX(0.757);">LEAGUE OF LEGENDS</span>
<svg style="left:1451px;top:174.5px;" width="9" height="13" viewBox="0 0 9 13"><path d="M2 1.500l5 5-5 5" fill="none" stroke="#1b4f93" stroke-width="1.700"/></svg>
<span style="left:984px;top:204.72px;font-size:11.5px;line-height:13.8px;color:#222;transform-origin:50% 50%;transform:translateX(-50%) scaleX(0.782);">1X2</span>
<span style="left:1162px;top:204.72px;font-size:11.5px;line-height:13.8px;color:#222;transform-origin:50% 50%;transform:translateX(-50%) scaleX(0.763);">OVER/UNDER</span>
<span style="left:1340px;top:204.72px;font-size:11.5px;line-height:13.8px;color:#222;transform-origin:50% 50%;transform:translateX(-50%) scaleX(0.777);">NEXT GOAL</span>
<span style="left:408px;top:226.9px;font-size:9.5px;line-height:11.4px;color:#222;transform-origin:50% 50%;transform:translateX(-50%) scaleX(0.881);">TIME</span>
<span style="left:443px;top:226.9px;font-size:9.5px;line-height:11.4px;color:#222;transform-origin:0 50%;transform:scaleX(0.821);">EVENT</span>
<span style="left:925.5px;top:226.4px;font-size:9.5px;line-height:11.4px;color:#222;transform-origin:50% 50%;transform:translateX(-50%) scaleX(0.85);">1</span>
<span style="left:984px;top:226.4px;font-size:9.5px;line-height:11.4px;color:#222;letter-spacing:0.3px;transform-origin:50% 50%;transform:translateX(-50%) scaleX(0.8);">X-DRAW</span>
<span style="left:1043px;top:226.4px;font-size:9.5px;line-height:11.4px;color:#222;transform-origin:50% 50%;transform:translateX(-50%) scaleX(0.85);">2</span>
<span style="left:1104px;top:226.4px;font-size:9.5px;line-height:11.4px;color:#222;letter-spacing:0.3px;transform-origin:50% 50%;transform:translateX(-50%) scaleX(0.8);">GOALS</span>
<span style="left:1162px;top:226.4px;font-size:9.5px;line-height:11.4px;color:#222;letter-spacing:0.3px;transform-origin:50% 50%;transform:translateX(-50%) scaleX(0.8);">OVER</span>
<span style="left:1221px;top:226.4px;font-size:9.5px;line-height:11.4px;color:#222;letter-spacing:0.3px;transform-origin:50% 50%;transform:translateX(-50%) scaleX(0.8);">UNDER</span>
<span style="left:1275px;top:226.4px;font-size:9.5px;line-height:11.4px;color:#222;letter-spacing:0.3px;transform-origin:50% 50%;transform:translateX(-50%) scaleX(0.8);">GOALS</span>
<span style="left:1319px;top:226.4px;font-size:9.5px;line-height:11.4px;color:#222;transform-origin:50% 50%;transform:translateX(-50%) scaleX(0.85);">1</span>
<span style="left:1363px;top:226.4px;font-size:9.5px;line-height:11.4px;color:#222;letter-spacing:0.3px;transform-origin:50% 50%;transform:translateX(-50%) scaleX(0.8);">X-DRAW</span>
<span style="left:1407px;top:226.4px;font-size:9.5px;line-height:11.4px;color:#222;transform-origin:50% 50%;transform:translateX(-50%) scaleX(0.85);">2</span>
<span style="left:1451px;top:226.4px;font-size:9.5px;line-height:11.4px;color:#222;letter-spacing:0.3px;transform-origin:50% 50%;transform:translateX(-50%) scaleX(0.8);">MORE</span>
<div style="left:383px;top:245px;width:1088px;height:33.5px;background:#fff;"></div>
<div style="left:383px;top:277.2px;width:1088px;height:1px;background:#b4b4b4;"></div>
<span style="left:391px;top:255.41px;font-size:11.5px;line-height:13.8px;color:#2a2a2a;transform-origin:0 50%;transform:scaleX(0.996);">CHINA LEAGUE I, CHINA</span>
<div style="left:383px;top:278px;width:1088px;height:40.5px;background:#f0f0f0;"></div>
<div style="left:432px;top:278px;width:1px;height:40.5px;background:#cfcfcf;"></div>
<span style="left:406px;top:291.76px;font-size:11px;line-height:13.2px;color:#2b5aa5;font-weight:bold;transform-origin:50% 50%;transform:translateX(-50%) scaleX(0.8);">45</span>
<span style="left:442.3px;top:292.06px;font-size:10.5px;line-height:12.6px;color:#555;letter-spacing:1px;transform-origin:0 50%;transform:scaleX(0.795);">LIAONING SHENYANG UR...</span>
<div style="left:585px;top:287px;width:29px;height:23px;background:#1560bd;"></div>
<span style="left:599.5px;top:291.08px;font-size:13px;line-height:15.6px;color:#fff;font-weight:bold;transform-origin:50% 50%;transform:translateX(-50%) scaleX(1);">0</span>
<span style="left:619px;top:291.76px;font-size:11px;line-height:13.2px;color:#444;transform-origin:50% 50%;transform:translateX(-50%) scaleX(1);">-</span>
<div style="left:624px;top:287px;width:29px;height:23px;background:#1560bd;"></div>
<span style="left:638.5px;top:291.08px;font-size:13px;line-height:15.6px;color:#fff;font-weight:bold;transform-origin:50% 50%;transform:translateX(-50%) scaleX(1);">2</span>
<span style="left:663px;top:292.06px;font-size:10.5px;line-height:12.6px;color:#555;letter-spacing:1px;transform-origin:0 50%;transform:scaleX(0.818);">KUNSHAN FC</span>
<svg style="left:860px;top:291.75px;" width="14" height="14" viewBox="0 0 14 14"><path d="M7 1.200l1.750 3.900 4.250.45-3.200 2.850.9 4.200L7 10.450 3.300 12.600l.9-4.200L1 5.550l4.250-.45z" fill="none" stroke="#222" stroke-width="1.200" stroke-linejoin="round"/></svg>
<svg style="left:877.5px;top:290.75px;" width="13.5" height="14" viewBox="0 0 13 13.500"><rect x=".5" y="6.500" width="2.800" height="6.500" fill="#222"/><rect x="5" y="1" width="2.800" height="12" fill="#222"/><rect x="9.500" y="5" width="2.800" height="8" fill="#222"/></svg>
<div style="left:897.3px;top:284.2px;width:56.5px;height:27.5px;background:#dedede;"></div>
<span style="left:925.55px;top:291.26px;font-size:11px;line-height:13.2px;color:#2a2a2a;letter-spacing:0.3px;transform-origin:50% 50%;transform:translateX(-50%) scaleX(0.82);">41</span>
<div style="left:956px;top:284.2px;width:56.5px;height:27.5px;background:#dedede;"></div>
<span style="left:984.25px;top:291.26px;font-size:11px;line-height:13.2px;color:#2a2a2a;letter-spacing:0.3px;transform-origin:50% 50%;transform:translateX(-50%) scaleX(0.82);">41</span>
<div style="left:1015px;top:284.2px;width:56.5px;height:27.5px;background:#dedede;"></div>
<span style="left:1043.25px;top:291.26px;font-size:11px;line-height:13.2px;color:#2a2a2a;letter-spacing:0.3px;transform-origin:50% 50%;transform:translateX(-50%) scaleX(0.82);">1.01</span>
<div style="left:1074.5px;top:284.2px;width:58px;height:27.5px;background:#f3f3f3;"></div>
<span style="left:1103.5px;top:292.26px;font-size:11px;line-height:13.2px;color:#5570a8;letter-spacing:0.3px;transform-origin:50% 50%;transform:translateX(-50%) scaleX(0.82);">3.5</span>
<div style="left:1135px;top:284.2px;width:55.5px;height:27.5px;background:#dedede;"></div>
<span style="left:1162.75px;top:291.26px;font-size:11px;line-height:13.2px;color:#2a2a2a;letter-spacing:0.3px;transform-origin:50% 50%;transform:translateX(-50%) scaleX(0.82);">1.8</span>
<div style="left:1193.5px;top:284.2px;width:55.5px;height:27.5px;background:#dedede;"></div>
<span style="left:1221.25px;top:291.26px;font-size:11px;line-height:13.2px;color:#2a2a2a;letter-spacing:0.3px;transform-origin:50% 50%;transform:translateX(-50%) scaleX(0.82);">1.91</span>
<div style="left:1254.5px;top:284.2px;width:40.5px;height:27.5px;background:#f3f3f3;"></div>
<span style="left:1274.75px;top:292.26px;font-size:11px;line-height:13.2px;color:#4a7fc0;letter-spacing:0.3px;transform-origin:50% 50%;transform:translateX(-50%) scaleX(0.82);">0:2</span>
<div style="left:1298px;top:284.2px;width:41.5px;height:27.5px;background:#dedede;"></div>
<span style="left:1318.75px;top:291.26px;font-size:11px;line-height:13.2px;color:#2a2a2a;letter-spacing:0.3px;transform-origin:50% 50%;transform:translateX(-50%) scaleX(0.82);">5.5</span>
<div style="left:1342px;top:284.2px;width:41.5px;height:27.5px;background:#dedede;"></div>
<span style="left:1362.75px;top:291.26px;font-size:11px;line-height:13.2px;color:#2a2a2a;letter-spacing:0.3px;transform-origin:50% 50%;transform:translateX(-50%) scaleX(0.82);">5</span>
<div style="left:1386px;top:284.2px;width:41.5px;height:27.5px;background:#dedede;"></div>
<span style="left:1406.75px;top:291.26px;font-size:11px;line-height:13.2px;color:#2a2a2a;letter-spacing:0.3px;transform-origin:50% 50%;transform:translateX(-50%) scaleX(0.82);">1.42</span>
<div style="left:1431px;top:278px;width:40px;height:40.5px;background:#f4f4f4;"></div>
<div style="left:1431px;top:278px;width:1px;height:40.5px;background:#c9c9c9;"></div>
<span style="left:1450.5px;top:284.51px;font-size:11px;line-height:13.2px;color:#d3d3d3;letter-spacing:0.8px;transform-origin:50% 50%;transform:translateX(-50%) scaleX(0.926);">+10</span>
<svg style="left:1442.8px;top:298.3px;" width="16.5" height="12" viewBox="0 0 14 11"><circle cx="5.500" cy="5.500" r="4.600" fill="none" stroke="#d2d2d2" stroke-width="1.200"/><path d="M9.500 2.500l4 3-4 3z" fill="#d2d2d2"/><path d="M5.500 3.300v4.400M4.300 4.500h2.200M4.300 6.500h2.200" stroke="#d2d2d2" stroke-width=".8" fill="none"/></svg>
<div style="left:383px;top:318.5px;width:1088px;height:40.5px;background:#fff;"></div>
<div style="left:432px;top:318.5px;width:1px;height:40.5px;background:#cfcfcf;"></div>
<span style="left:406px;top:332.26px;font-size:11px;line-height:13.2px;color:#2b5aa5;font-weight:bold;transform-origin:50% 50%;transform:translateX(-50%) scaleX(0.8);">45</span>
<span style="left:574.5px;top:332.56px;font-size:10.5px;line-height:12.6px;color:#555;letter-spacing:1px;transform-origin:100% 50%;transform:translateX(-100%) scaleX(0.817);">X. TIANSHAN LEOPARD</span>
<div style="left:585px;top:327.5px;width:29px;height:23px;background:#1560bd;"></div>
<span style="left:599.5px;top:331.58px;font-size:13px;line-height:15.6px;color:#fff;font-weight:bold;transform-origin:50% 50%;transform:translateX(-50%) scaleX(1);">0</span>
<span style="left:619px;top:332.26px;font-size:11px;line-height:13.2px;color:#444;transform-origin:50% 50%;transform:translateX(-50%) scaleX(1);">-</span>
<div style="left:624px;top:327.5px;width:29px;height:23px;background:#1560bd;"></div>
<span style="left:638.5px;top:331.58px;font-size:13px;line-height:15.6px;color:#fff;font-weight:bold;transform-origin:50% 50%;transform:translateX(-50%) scaleX(1);">2</span>
<span style="left:663px;top:332.56px;font-size:10.5px;line-height:12.6px;color:#555;letter-spacing:1px;transform-origin:0 50%;transform:scaleX(0.822);">NANTONG ZHIYUN</span>
<svg style="left:860px;top:332.25px;" width="14" height="14" viewBox="0 0 14 14"><path d="M7 1.200l1.750 3.900 4.250.45-3.200 2.850.9 4.200L7 10.450 3.300 12.600l.9-4.200L1 5.550l4.250-.45z" fill="none" stroke="#222" stroke-width="1.200" stroke-linejoin="round"/></svg>
<svg style="left:877.5px;top:331.25px;" width="13.5" height="14" viewBox="0 0 13 13.500"><rect x=".5" y="6.500" width="2.800" height="6.500" fill="#222"/><rect x="5" y="1" width="2.800" height="12" fill="#222"/><rect x="9.500" y="5" width="2.800" height="8" fill="#222"/></svg>
<div style="left:897.3px;top:324.7px;width:56.5px;height:27.5px;background:#dedede;"></div>
<span style="left:925.55px;top:331.76px;font-size:11px;line-height:13.2px;color:#2a2a2a;letter-spacing:0.3px;transform-origin:50% 50%;transform:translateX(-50%) scaleX(0.82);">35</span>
<div style="left:956px;top:324.7px;width:56.5px;height:27.5px;background:#dedede;"></div>
<span style="left:984.25px;top:331.76px;font-size:11px;line-height:13.2px;color:#2a2a2a;letter-spacing:0.3px;transform-origin:50% 50%;transform:translateX(-50%) scaleX(0.82);">26</span>
<div style="left:1015px;top:324.7px;width:56.5px;height:27.5px;background:#dedede;"></div>
<span style="left:1043.25px;top:331.76px;font-size:11px;line-height:13.2px;color:#2a2a2a;letter-spacing:0.3px;transform-origin:50% 50%;transform:translateX(-50%) scaleX(0.82);">1.01</span>
<div style="left:1074.5px;top:324.7px;width:58px;height:27.5px;background:#f4f4f4;"></div>
<span style="left:1103.5px;top:332.76px;font-size:11px;line-height:13.2px;color:#5570a8;letter-spacing:0.3px;transform-origin:50% 50%;transform:translateX(-50%) scaleX(0.82);">3.5</span>
<div style="left:1135px;top:324.7px;width:55.5px;height:27.5px;background:#dedede;"></div>
<span style="left:1162.75px;top:331.76px;font-size:11px;line-height:13.2px;color:#2a2a2a;letter-spacing:0.3px;transform-origin:50% 50%;transform:translateX(-50%) scaleX(0.82);">1.8</span>
<div style="left:1193.5px;top:324.7px;width:55.5px;height:27.5px;background:#dedede;"></div>
<span style="left:1221.25px;top:331.76px;font-size:11px;line-height:13.2px;color:#2a2a2a;letter-spacing:0.3px;transform-origin:50% 50%;transform:translateX(-50%) scaleX(0.82);">1.91</span>
<div style="left:1254.5px;top:324.7px;width:40.5px;height:27.5px;background:#f4f4f4;"></div>
<span style="left:1274.75px;top:332.76px;font-size:11px;line-height:13.2px;color:#4a7fc0;letter-spacing:0.3px;transform-origin:50% 50%;transform:translateX(-50%) scaleX(0.82);">0:2</span>
<div style="left:1298px;top:324.7px;width:41.5px;height:27.5px;background:#dedede;"></div>
<span style="left:1318.75px;top:331.76px;font-size:11px;line-height:13.2px;color:#2a2a2a;letter-spacing:0.3px;transform-origin:50% 50%;transform:translateX(-50%) scaleX(0.82);">4.2</span>
<div style="left:1342px;top:324.7px;width:41.5px;height:27.5px;background:#dedede;"></div>
<span style="left:1362.75px;top:331.76px;font-size:11px;line-height:13.2px;color:#2a2a2a;letter-spacing:0.3px;transform-origin:50% 50%;transform:translateX(-50%) scaleX(0.82);">5</span>
<div style="left:1386px;top:324.7px;width:41.5px;height:27.5px;background:#dedede;"></div>
<span style="left:1406.75px;top:331.76px;font-size:11px;line-height:13.2px;color:#2a2a2a;letter-spacing:0.3px;transform-origin:50% 50%;transform:translateX(-50%) scaleX(0.82);">1.52</span>
<div style="left:1431px;top:318.5px;width:40px;height:40.5px;background:#fff;"></div>
<div style="left:1431px;top:318.5px;width:1px;height:40.5px;background:#c9c9c9;"></div>
<span style="left:1450.5px;top:325.01px;font-size:11px;line-height:13.2px;color:#d3d3d3;letter-spacing:0.8px;transform-origin:50% 50%;transform:translateX(-50%) scaleX(0.926);">+10</span>
<svg style="left:1442.8px;top:338.8px;" width="16.5" height="12" viewBox="0 0 14 11"><circle cx="5.500" cy="5.500" r="4.600" fill="none" stroke="#d2d2d2" stroke-width="1.200"/><path d="M9.500 2.500l4 3-4 3z" fill="#d2d2d2"/><path d="M5.500 3.300v4.400M4.300 4.500h2.200M4.300 6.500h2.200" stroke="#d2d2d2" stroke-width=".8" fill="none"/></svg>
<div style="left:383px;top:359px;width:1088px;height:33.5px;background:#fff;"></div>
<div style="left:383px;top:391.2px;width:1088px;height:1px;background:#b4b4b4;"></div>
<span style="left:391px;top:369.41px;font-size:11.5px;line-height:13.8px;color:#2a2a2a;transform-origin:0 50%;transform:scaleX(0.938);">PREMIER LEAGUE, MALAYSIA</span>
<div style="left:383px;top:392.5px;width:1088px;height:40.5px;background:#f0f0f0;"></div>
<div style="left:432px;top:392.5px;width:1px;height:40.5px;background:#cfcfcf;"></div>
<span style="left:406px;top:406.26px;font-size:11px;line-height:13.2px;color:#2b5aa5;font-weight:bold;transform-origin:50% 50%;transform:translateX(-50%) scaleX(0.8);">7</span>
<span style="left:574.5px;top:406.56px;font-size:10.5px;line-height:12.6px;color:#555;letter-spacing:1px;transform-origin:100% 50%;transform:translateX(-100%) scaleX(0.823);">KELANTAN FA</span>
<div style="left:585px;top:401.5px;width:29px;height:23px;background:#1560bd;"></div>
<span style="left:599.5px;top:405.58px;font-size:13px;line-height:15.6px;color:#fff;font-weight:bold;transform-origin:50% 50%;transform:translateX(-50%) scaleX(1);">0</span>
<span style="left:619px;top:406.26px;font-size:11px;line-height:13.2px;color:#444;transform-origin:50% 50%;transform:translateX(-50%) scaleX(1);">-</span>
<div style="left:624px;top:401.5px;width:29px;height:23px;background:#1560bd;"></div>
<span style="left:638.5px;top:405.58px;font-size:13px;line-height:15.6px;color:#fff;font-weight:bold;transform-origin:50% 50%;transform:translateX(-50%) scaleX(1);">0</span>
<span style="left:663px;top:406.56px;font-size:10.5px;line-height:12.6px;color:#555;letter-spacing:1px;transform-origin:0 50%;transform:scaleX(0.805);">JOHOR DARUL TAKZIM F...</span>
<svg style="left:860px;top:406.25px;" width="14" height="14" viewBox="0 0 14 14"><path d="M7 1.200l1.750 3.900 4.250.45-3.200 2.850.9 4.200L7 10.450 3.300 12.600l.9-4.200L1 5.550l4.250-.45z" fill="none" stroke="#222" stroke-width="1.200" stroke-linejoin="round"/></svg>
<svg style="left:877.5px;top:405.25px;" width="13.5" height="14" viewBox="0 0 13 13.500"><rect x=".5" y="6.500" width="2.800" height="6.500" fill="#222"/><rect x="5" y="1" width="2.800" height="12" fill="#222"/><rect x="9.500" y="5" width="2.800" height="8" fill="#222"/></svg>
<div style="left:897.3px;top:398.7px;width:56.5px;height:27.5px;background:#dedede;"></div>
<span style="left:925.55px;top:405.76px;font-size:11px;line-height:13.2px;color:#2a2a2a;letter-spacing:0.3px;transform-origin:50% 50%;transform:translateX(-50%) scaleX(0.82);">5.25</span>
<div style="left:956px;top:398.7px;width:56.5px;height:27.5px;background:#dedede;"></div>
<span style="left:984.25px;top:405.76px;font-size:11px;line-height:13.2px;color:#2a2a2a;letter-spacing:0.3px;transform-origin:50% 50%;transform:translateX(-50%) scaleX(0.82);">3.5</span>
<div style="left:1015px;top:398.7px;width:56.5px;height:27.5px;background:#dedede;"></div>
<span style="left:1043.25px;top:405.76px;font-size:11px;line-height:13.2px;color:#2a2a2a;letter-spacing:0.3px;transform-origin:50% 50%;transform:translateX(-50%) scaleX(0.82);">1.62</span>
<div style="left:1074.5px;top:398.7px;width:58px;height:27.5px;background:#f3f3f3;"></div>
<span style="left:1103.5px;top:406.76px;font-size:11px;line-height:13.2px;color:#5570a8;letter-spacing:0.3px;transform-origin:50% 50%;transform:translateX(-50%) scaleX(0.82);">2.5</span>
<div style="left:1135px;top:398.7px;width:55.5px;height:27.5px;background:#dedede;"></div>
<span style="left:1162.75px;top:405.76px;font-size:11px;line-height:13.2px;color:#2a2a2a;letter-spacing:0.3px;transform-origin:50% 50%;transform:translateX(-50%) scaleX(0.82);">2.1</span>
<div style="left:1193.5px;top:398.7px;width:55.5px;height:27.5px;background:#dedede;"></div>
<span style="left:1221.25px;top:405.76px;font-size:11px;line-height:13.2px;color:#2a2a2a;letter-spacing:0.3px;transform-origin:50% 50%;transform:translateX(-50%) scaleX(0.82);">1.67</span>
<div style="left:1254.5px;top:398.7px;width:40.5px;height:27.5px;background:#f3f3f3;"></div>
<span style="left:1274.75px;top:406.76px;font-size:11px;line-height:13.2px;color:#4a7fc0;letter-spacing:0.3px;transform-origin:50% 50%;transform:translateX(-50%) scaleX(0.82);">0:0</span>
<div style="left:1298px;top:398.7px;width:41.5px;height:27.5px;background:#dedede;"></div>
<span style="left:1318.75px;top:405.76px;font-size:11px;line-height:13.2px;color:#2a2a2a;letter-spacing:0.3px;transform-origin:50% 50%;transform:translateX(-50%) scaleX(0.82);">3.15</span>
<div style="left:1342px;top:398.7px;width:41.5px;height:27.5px;background:#dedede;"></div>
<span style="left:1362.75px;top:405.76px;font-size:11px;line-height:13.2px;color:#2a2a2a;letter-spacing:0.3px;transform-origin:50% 50%;transform:translateX(-50%) scaleX(0.82);">9</span>
<div style="left:1386px;top:398.7px;width:41.5px;height:27.5px;background:#dedede;"></div>
<span style="left:1406.75px;top:405.76px;font-size:11px;line-height:13.2px;color:#2a2a2a;letter-spacing:0.3px;transform-origin:50% 50%;transform:translateX(-50%) scaleX(0.82);">1.52</span>
<div style="left:1431px;top:392.5px;width:40px;height:40.5px;background:#f4f4f4;"></div>
<div style="left:1431px;top:392.5px;width:1px;height:40.5px;background:#c9c9c9;"></div>
<span style="left:1450.5px;top:399.01px;font-size:11px;line-height:13.2px;color:#d3d3d3;letter-spacing:0.8px;transform-origin:50% 50%;transform:translateX(-50%) scaleX(0.926);">+15</span>
<svg style="left:1442.8px;top:412.8px;" width="16.5" height="12" viewBox="0 0 14 11"><circle cx="5.500" cy="5.500" r="4.600" fill="none" stroke="#d2d2d2" stroke-width="1.200"/><path d="M9.500 2.500l4 3-4 3z" fill="#d2d2d2"/><path d="M5.500 3.300v4.400M4.300 4.500h2.200M4.300 6.500h2.200" stroke="#d2d2d2" stroke-width=".8" fill="none"/></svg>
<div style="left:383px;top:433px;width:1088px;height:33.5px;background:#fff;"></div>
<div style="left:383px;top:465.2px;width:1088px;height:1px;background:#b4b4b4;"></div>
<span style="left:391px;top:443.41px;font-size:11.5px;line-height:13.8px;color:#2a2a2a;transform-origin:0 50%;transform:scaleX(0.972);">SOUTH AUSTRALIA NPL, WOMEN, AUSTRALIA</span>
<div style="left:383px;top:466.5px;width:1088px;height:40.5px;background:#fff;"></div>
<div style="left:432px;top:466.5px;width:1px;height:40.5px;background:#cfcfcf;"></div>
<span style="left:406px;top:480.26px;font-size:11px;line-height:13.2px;color:#555;transform-origin:50% 50%;transform:translateX(-50%) scaleX(0.8);">7</span>
<span style="left:574.5px;top:480.56px;font-size:10.5px;line-height:12.6px;color:#555;letter-spacing:1px;transform-origin:100% 50%;transform:translateX(-100%) scaleX(0.81);">MODBURY VISTA</span>
<div style="left:585px;top:475.5px;width:29px;height:23px;background:#1560bd;"></div>
<span style="left:599.5px;top:479.58px;font-size:13px;line-height:15.6px;color:#fff;font-weight:bold;transform-origin:50% 50%;transform:translateX(-50%) scaleX(1);">1</span>
<span style="left:619px;top:480.26px;font-size:11px;line-height:13.2px;color:#444;transform-origin:50% 50%;transform:translateX(-50%) scaleX(1);">-</span>
<div style="left:624px;top:475.5px;width:29px;height:23px;background:#1560bd;"></div>
<span style="left:638.5px;top:479.58px;font-size:13px;line-height:15.6px;color:#fff;font-weight:bold;transform-origin:50% 50%;transform:translateX(-50%) scaleX(1);">0</span>
<span style="left:663px;top:480.56px;font-size:10.5px;line-height:12.6px;color:#555;letter-spacing:1px;transform-origin:0 50%;transform:scaleX(0.825);">FULHAM UNITED</span>
<svg style="left:860px;top:480.25px;" width="14" height="14" viewBox="0 0 14 14"><path d="M7 1.200l1.750 3.900 4.250.45-3.200 2.850.9 4.200L7 10.450 3.300 12.600l.9-4.200L1 5.550l4.250-.45z" fill="none" stroke="#222" stroke-width="1.200" stroke-linejoin="round"/></svg>
<svg style="left:877.5px;top:479.25px;" width="13.5" height="14" viewBox="0 0 13 13.500"><rect x=".5" y="6.500" width="2.800" height="6.500" fill="#222"/><rect x="5" y="1" width="2.800" height="12" fill="#222"/><rect x="9.500" y="5" width="2.800" height="8" fill="#222"/></svg>
<div style="left:897.3px;top:472.7px;width:56.5px;height:27.5px;background:#dedede;"></div>
<span style="left:925.55px;top:479.76px;font-size:11px;line-height:13.2px;color:#2a2a2a;letter-spacing:0.3px;transform-origin:50% 50%;transform:translateX(-50%) scaleX(0.82);">1.85</span>
<div style="left:956px;top:472.7px;width:56.5px;height:27.5px;background:#dedede;"></div>
<span style="left:984.25px;top:479.76px;font-size:11px;line-height:13.2px;color:#2a2a2a;letter-spacing:0.3px;transform-origin:50% 50%;transform:translateX(-50%) scaleX(0.82);">3.75</span>
<div style="left:1015px;top:472.7px;width:56.5px;height:27.5px;background:#dedede;"></div>
<span style="left:1043.25px;top:479.76px;font-size:11px;line-height:13.2px;color:#2a2a2a;letter-spacing:0.3px;transform-origin:50% 50%;transform:translateX(-50%) scaleX(0.82);">3.5</span>
<div style="left:1074.5px;top:472.7px;width:58px;height:27.5px;background:#f4f4f4;"></div>
<span style="left:1103.5px;top:480.76px;font-size:11px;line-height:13.2px;color:#5570a8;letter-spacing:0.3px;transform-origin:50% 50%;transform:translateX(-50%) scaleX(0.82);">3.5</span>
<div style="left:1135px;top:472.7px;width:55.5px;height:27.5px;background:#dedede;"></div>
<span style="left:1162.75px;top:479.76px;font-size:11px;line-height:13.2px;color:#2a2a2a;letter-spacing:0.3px;transform-origin:50% 50%;transform:translateX(-50%) scaleX(0.82);">1.62</span>
<div style="left:1193.5px;top:472.7px;width:55.5px;height:27.5px;background:#dedede;"></div>
<span style="left:1221.25px;top:479.76px;font-size:11px;line-height:13.2px;color:#2a2a2a;letter-spacing:0.3px;transform-origin:50% 50%;transform:translateX(-50%) scaleX(0.82);">2.2</span>
<div style="left:1254.5px;top:472.7px;width:40.5px;height:27.5px;background:#f4f4f4;"></div>
<span style="left:1274.75px;top:480.76px;font-size:11px;line-height:13.2px;color:#4a7fc0;letter-spacing:0.3px;transform-origin:50% 50%;transform:translateX(-50%) scaleX(0.82);">1:0</span>
<div style="left:1298px;top:472.7px;width:41.5px;height:27.5px;background:#dedede;"></div>
<span style="left:1318.75px;top:479.76px;font-size:11px;line-height:13.2px;color:#2a2a2a;letter-spacing:0.3px;transform-origin:50% 50%;transform:translateX(-50%) scaleX(0.82);">2.35</span>
<div style="left:1342px;top:472.7px;width:41.5px;height:27.5px;background:#dedede;"></div>
<span style="left:1362.75px;top:479.76px;font-size:11px;line-height:13.2px;color:#2a2a2a;letter-spacing:0.3px;transform-origin:50% 50%;transform:translateX(-50%) scaleX(0.82);">16</span>
<div style="left:1386px;top:472.7px;width:41.5px;height:27.5px;background:#dedede;"></div>
<span style="left:1406.75px;top:479.76px;font-size:11px;line-height:13.2px;color:#2a2a2a;letter-spacing:0.3px;transform-origin:50% 50%;transform:translateX(-50%) scaleX(0.82);">1.7</span>
<div style="left:1431px;top:466.5px;width:40px;height:40.5px;background:#fff;"></div>
<div style="left:1431px;top:466.5px;width:1px;height:40.5px;background:#c9c9c9;"></div>
<span style="left:1450.5px;top:473.01px;font-size:11px;line-height:13.2px;color:#d3d3d3;letter-spacing:0.8px;transform-origin:50% 50%;transform:translateX(-50%) scaleX(0.926);">+16</span>
<svg style="left:1442.8px;top:486.8px;" width="16.5" height="12" viewBox="0 0 14 11"><circle cx="5.500" cy="5.500" r="4.600" fill="none" stroke="#d2d2d2" stroke-width="1.200"/><path d="M9.500 2.500l4 3-4 3z" fill="#d2d2d2"/><path d="M5.500 3.300v4.400M4.300 4.500h2.200M4.300 6.500h2.200" stroke="#d2d2d2" stroke-width=".8" fill="none"/></svg>
<div style="left:383px;top:507px;width:1088px;height:33.5px;background:#fff;"></div>
<div style="left:383px;top:539.2px;width:1088px;height:1px;background:#b4b4b4;"></div>
<span style="left:391px;top:517.42px;font-size:11.5px;line-height:13.8px;color:#2a2a2a;transform-origin:0 50%;transform:scaleX(0.96);">DELHI SENIOR DIVISION, INDIA</span>
<div style="left:383px;top:540.5px;width:1088px;height:40.5px;background:#f0f0f0;"></div>
<div style="left:432px;top:540.5px;width:1px;height:40.5px;background:#cfcfcf;"></div>
<span style="left:406px;top:554.26px;font-size:11px;line-height:13.2px;color:#2b5aa5;font-weight:bold;transform-origin:50% 50%;transform:translateX(-50%) scaleX(0.8);">45</span>
<span style="left:574.5px;top:554.55px;font-size:10.5px;line-height:12.6px;color:#555;letter-spacing:1px;transform-origin:100% 50%;transform:translateX(-100%) scaleX(0.834);">VATIKA FC</span>
<div style="left:585px;top:549.5px;width:29px;height:23px;background:#1560bd;"></div>
<span style="left:599.5px;top:553.58px;font-size:13px;line-height:15.6px;color:#fff;font-weight:bold;transform-origin:50% 50%;transform:translateX(-50%) scaleX(1);">0</span>
<span style="left:619px;top:554.26px;font-size:11px;line-height:13.2px;color:#444;transform-origin:50% 50%;transform:translateX(-50%) scaleX(1);">-</span>
<div style="left:624px;top:549.5px;width:29px;height:23px;background:#1560bd;"></div>
<span style="left:638.5px;top:553.58px;font-size:13px;line-height:15.6px;color:#fff;font-weight:bold;transform-origin:50% 50%;transform:translateX(-50%) scaleX(1);">0</span>
<span style="left:663px;top:554.55px;font-size:10.5px;line-height:12.6px;color:#555;letter-spacing:1px;transform-origin:0 50%;transform:scaleX(0.81);">INDIAN AIR FORCE</span>
<svg style="left:860px;top:554.25px;" width="14" height="14" viewBox="0 0 14 14"><path d="M7 1.200l1.750 3.900 4.250.45-3.200 2.850.9 4.200L7 10.450 3.300 12.600l.9-4.200L1 5.550l4.250-.45z" fill="none" stroke="#222" stroke-width="1.200" stroke-linejoin="round"/></svg>
<svg style="left:877.5px;top:553.25px;" width="13.5" height="14" viewBox="0 0 13 13.500"><rect x=".5" y="6.500" width="2.800" height="6.500" fill="#222"/><rect x="5" y="1" width="2.800" height="12" fill="#222"/><rect x="9.500" y="5" width="2.800" height="8" fill="#222"/></svg>
<div style="left:897.3px;top:546.7px;width:56.5px;height:27.5px;background:#dedede;"></div>
<span style="left:925.55px;top:553.76px;font-size:11px;line-height:13.2px;color:#2a2a2a;letter-spacing:0.3px;transform-origin:50% 50%;transform:translateX(-50%) scaleX(0.82);">2.75</span>
<div style="left:956px;top:546.7px;width:56.5px;height:27.5px;background:#dedede;"></div>
<span style="left:984.25px;top:553.76px;font-size:11px;line-height:13.2px;color:#2a2a2a;letter-spacing:0.3px;transform-origin:50% 50%;transform:translateX(-50%) scaleX(0.82);">2.7</span>
<div style="left:1015px;top:546.7px;width:56.5px;height:27.5px;background:#dedede;"></div>
<span style="left:1043.25px;top:553.76px;font-size:11px;line-height:13.2px;color:#2a2a2a;letter-spacing:0.3px;transform-origin:50% 50%;transform:translateX(-50%) scaleX(0.82);">2.8</span>
<div style="left:1074.5px;top:546.7px;width:58px;height:27.5px;background:#f3f3f3;"></div>
<span style="left:1103.5px;top:554.76px;font-size:11px;line-height:13.2px;color:#5570a8;letter-spacing:0.3px;transform-origin:50% 50%;transform:translateX(-50%) scaleX(0.82);">1.5</span>
<div style="left:1135px;top:546.7px;width:55.5px;height:27.5px;background:#dedede;"></div>
<span style="left:1162.75px;top:553.76px;font-size:11px;line-height:13.2px;color:#2a2a2a;letter-spacing:0.3px;transform-origin:50% 50%;transform:translateX(-50%) scaleX(0.82);">1.8</span>
<div style="left:1193.5px;top:546.7px;width:55.5px;height:27.5px;background:#dedede;"></div>
<span style="left:1221.25px;top:553.76px;font-size:11px;line-height:13.2px;color:#2a2a2a;letter-spacing:0.3px;transform-origin:50% 50%;transform:translateX(-50%) scaleX(0.82);">1.91</span>
<div style="left:1254.5px;top:546.7px;width:40.5px;height:27.5px;background:#f3f3f3;"></div>
<span style="left:1274.75px;top:554.76px;font-size:11px;line-height:13.2px;color:#4a7fc0;letter-spacing:0.3px;transform-origin:50% 50%;transform:translateX(-50%) scaleX(0.82);">0:0</span>
<div style="left:1298px;top:546.7px;width:41.5px;height:27.5px;background:#dedede;"></div>
<span style="left:1318.75px;top:553.76px;font-size:11px;line-height:13.2px;color:#2a2a2a;letter-spacing:0.3px;transform-origin:50% 50%;transform:translateX(-50%) scaleX(0.82);">2.25</span>
<div style="left:1342px;top:546.7px;width:41.5px;height:27.5px;background:#dedede;"></div>
<span style="left:1362.75px;top:553.76px;font-size:11px;line-height:13.2px;color:#2a2a2a;letter-spacing:0.3px;transform-origin:50% 50%;transform:translateX(-50%) scaleX(0.82);">5</span>
<div style="left:1386px;top:546.7px;width:41.5px;height:27.5px;background:#dedede;"></div>
<span style="left:1406.75px;top:553.76px;font-size:11px;line-height:13.2px;color:#2a2a2a;letter-spacing:0.3px;transform-origin:50% 50%;transform:translateX(-50%) scaleX(0.82);">2.25</span>
<div style="left:1431px;top:540.5px;width:40px;height:40.5px;background:#f4f4f4;"></div>
<div style="left:1431px;top:540.5px;width:1px;height:40.5px;background:#c9c9c9;"></div>
<span style="left:1450.5px;top:547.01px;font-size:11px;line-height:13.2px;color:#d3d3d3;letter-spacing:0.8px;transform-origin:50% 50%;transform:translateX(-50%) scaleX(0.963);">+11</span>
<svg style="left:1442.8px;top:560.8px;" width="16.5" height="12" viewBox="0 0 14 11"><circle cx="5.500" cy="5.500" r="4.600" fill="none" stroke="#d2d2d2" stroke-width="1.200"/><path d="M9.500 2.500l4 3-4 3z" fill="#d2d2d2"/><path d="M5.500 3.300v4.400M4.300 4.500h2.200M4.300 6.500h2.200" stroke="#d2d2d2" stroke-width=".8" fill="none"/></svg>
<div style="left:383px;top:581px;width:1088px;height:33.5px;background:#fff;"></div>
<div style="left:383px;top:613.2px;width:1088px;height:1px;background:#b4b4b4;"></div>
<span style="left:391px;top:591.42px;font-size:11.5px;line-height:13.8px;color:#2a2a2a;transform-origin:0 50%;transform:scaleX(0.98);">VICTORIA - NPL U21, AUSTRALIA</span>
<div style="left:383px;top:614.5px;width:1088px;height:40.5px;background:#fff;"></div>
<div style="left:432px;top:614.5px;width:1px;height:40.5px;background:#cfcfcf;"></div>
<span style="left:406px;top:628.26px;font-size:11px;line-height:13.2px;color:#2b5aa5;font-weight:bold;transform-origin:50% 50%;transform:translateX(-50%) scaleX(0.8);">33</span>
<span style="left:442.3px;top:628.55px;font-size:10.5px;line-height:12.6px;color:#555;letter-spacing:1px;transform-origin:0 50%;transform:scaleX(0.776);">BENTLEIGH GREENS SC U...</span>
<div style="left:585px;top:623.5px;width:29px;height:23px;background:#1560bd;"></div>
<span style="left:599.5px;top:627.58px;font-size:13px;line-height:15.6px;color:#fff;font-weight:bold;transform-origin:50% 50%;transform:translateX(-50%) scaleX(1);">0</span>
<span style="left:619px;top:628.26px;font-size:11px;line-height:13.2px;color:#444;transform-origin:50% 50%;transform:translateX(-50%) scaleX(1);">-</span>
<div style="left:624px;top:623.5px;width:29px;height:23px;background:#1560bd;"></div>
<span style="left:638.5px;top:627.58px;font-size:13px;line-height:15.6px;color:#fff;font-weight:bold;transform-origin:50% 50%;transform:translateX(-50%) scaleX(1);">0</span>
<span style="left:663px;top:628.55px;font-size:10.5px;line-height:12.6px;color:#555;letter-spacing:1px;transform-origin:0 50%;transform:scaleX(0.797);">OAKLEIGH CANNONS FC ...</span>
<svg style="left:860px;top:628.25px;" width="14" height="14" viewBox="0 0 14 14"><path d="M7 1.200l1.750 3.900 4.250.45-3.200 2.850.9 4.200L7 10.450 3.300 12.600l.9-4.200L1 5.550l4.250-.45z" fill="none" stroke="#222" stroke-width="1.200" stroke-linejoin="round"/></svg>
<svg style="left:877.5px;top:627.25px;" width="13.5" height="14" viewBox="0 0 13 13.500"><rect x=".5" y="6.500" width="2.800" height="6.500" fill="#222"/><rect x="5" y="1" width="2.800" height="12" fill="#222"/><rect x="9.500" y="5" width="2.800" height="8" fill="#222"/></svg>
<div style="left:897.3px;top:620.7px;width:56.5px;height:27.5px;background:#dedede;"></div>
<span style="left:925.55px;top:627.76px;font-size:11px;line-height:13.2px;color:#2a2a2a;letter-spacing:0.3px;transform-origin:50% 50%;transform:translateX(-50%) scaleX(0.82);">2.15</span>
<div style="left:956px;top:620.7px;width:56.5px;height:27.5px;background:#dedede;"></div>
<span style="left:984.25px;top:627.76px;font-size:11px;line-height:13.2px;color:#2a2a2a;letter-spacing:0.3px;transform-origin:50% 50%;transform:translateX(-50%) scaleX(0.82);">2.8</span>
<div style="left:1015px;top:620.7px;width:56.5px;height:27.5px;background:#dedede;"></div>
<span style="left:1043.25px;top:627.76px;font-size:11px;line-height:13.2px;color:#2a2a2a;letter-spacing:0.3px;transform-origin:50% 50%;transform:translateX(-50%) scaleX(0.82);">3.7</span>
<div style="left:1074.5px;top:620.7px;width:58px;height:27.5px;background:#f4f4f4;"></div>
<span style="left:1103.5px;top:628.76px;font-size:11px;line-height:13.2px;color:#5570a8;letter-spacing:0.3px;transform-origin:50% 50%;transform:translateX(-50%) scaleX(0.82);">1.5</span>
<div style="left:1135px;top:620.7px;width:55.5px;height:27.5px;background:#dedede;"></div>
<span style="left:1162.75px;top:627.76px;font-size:11px;line-height:13.2px;color:#2a2a2a;letter-spacing:0.3px;transform-origin:50% 50%;transform:translateX(-50%) scaleX(0.82);">1.67</span>
<div style="left:1193.5px;top:620.7px;width:55.5px;height:27.5px;background:#dedede;"></div>
<span style="left:1221.25px;top:627.76px;font-size:11px;line-height:13.2px;color:#2a2a2a;letter-spacing:0.3px;transform-origin:50% 50%;transform:translateX(-50%) scaleX(0.82);">2.1</span>
<div style="left:1254.5px;top:620.7px;width:40.5px;height:27.5px;background:#f4f4f4;"></div>
<span style="left:1274.75px;top:628.76px;font-size:11px;line-height:13.2px;color:#4a7fc0;letter-spacing:0.3px;transform-origin:50% 50%;transform:translateX(-50%) scaleX(0.82);">0:0</span>
<div style="left:1298px;top:620.7px;width:41.5px;height:27.5px;background:#dedede;"></div>
<span style="left:1318.75px;top:627.76px;font-size:11px;line-height:13.2px;color:#2a2a2a;letter-spacing:0.3px;transform-origin:50% 50%;transform:translateX(-50%) scaleX(0.82);">1.85</span>
<div style="left:1342px;top:620.7px;width:41.5px;height:27.5px;background:#dedede;"></div>
<span style="left:1362.75px;top:627.76px;font-size:11px;line-height:13.2px;color:#2a2a2a;letter-spacing:0.3px;transform-origin:50% 50%;transform:translateX(-50%) scaleX(0.82);">5.5</span>
<div style="left:1386px;top:620.7px;width:41.5px;height:27.5px;background:#dedede;"></div>
<span style="left:1406.75px;top:627.76px;font-size:11px;line-height:13.2px;color:#2a2a2a;letter-spacing:0.3px;transform-origin:50% 50%;transform:translateX(-50%) scaleX(0.82);">2.7</span>
<div style="left:1431px;top:614.5px;width:40px;height:40.5px;background:#fff;"></div>
<div style="left:1431px;top:614.5px;width:1px;height:40.5px;background:#c9c9c9;"></div>
<span style="left:1450.5px;top:621.01px;font-size:11px;line-height:13.2px;color:#d3d3d3;letter-spacing:0.8px;transform-origin:50% 50%;transform:translateX(-50%) scaleX(0.926);">+16</span>
<svg style="left:1442.8px;top:634.8px;" width="16.5" height="12" viewBox="0 0 14 11"><circle cx="5.500" cy="5.500" r="4.600" fill="none" stroke="#d2d2d2" stroke-width="1.200"/><path d="M9.500 2.500l4 3-4 3z" fill="#d2d2d2"/><path d="M5.500 3.300v4.400M4.300 4.500h2.200M4.300 6.500h2.200" stroke="#d2d2d2" stroke-width=".8" fill="none"/></svg>
<span style="left:391px;top:667.62px;font-size:12.5px;line-height:15.0px;color:#222;transform-origin:0 50%;transform:scaleX(0.792);">HIGHLIGHTS</span>
<div style="left:1416px;top:657px;width:1px;height:35px;background:#333;"></div>
<div style="left:1424.5px;top:666.5px;width:2.2px;height:15px;background:#1d6fd2;"></div>
<div style="left:1428.5px;top:666.5px;width:2.2px;height:15px;background:#1d6fd2;"></div>
<div style="left:1432.5px;top:666.5px;width:2.2px;height:15px;background:#1d6fd2;"></div>
<div style="left:1436.5px;top:666.5px;width:2.2px;height:15px;background:#1d6fd2;"></div>
<div style="left:1449.0px;top:666.5px;width:2.4px;height:15px;background:#2a2a2a;"></div>
<div style="left:1453.2px;top:666.5px;width:2.4px;height:15px;background:#2a2a2a;"></div>
<div style="left:1457.4px;top:666.5px;width:2.4px;height:15px;background:#2a2a2a;"></div>
<div style="left:383px;top:693px;width:1088px;height:34.7px;background:#fff;"></div>
<div style="left:383px;top:693px;width:91px;height:34.7px;background:#1668cb;"></div>
<svg style="left:389px;top:701px;" width="18" height="18" viewBox="0 0 20 20"><circle cx="10" cy="10" r="9.300" fill="#fff"/><circle cx="10" cy="10" r="7.300" fill="none" stroke="#1668cb" stroke-width=".9" stroke-dasharray="5.2 4" stroke-dashoffset="2.6"/><polygon points="10.00,6.10 13.71,8.79 12.29,13.16 7.71,13.16 6.29,8.79" fill="#fff" stroke="#1668cb" stroke-width="1.200"/><path d="M10.00 6.10L10.00 2.70M13.71 8.79L16.94 7.74M12.29 13.16L14.29 15.91M7.71 13.16L5.71 15.91M6.29 8.79L3.06 7.74" stroke="#1668cb" stroke-width="1.100"/></svg>
<span style="left:414px;top:703.12px;font-size:12.5px;line-height:15.0px;color:#fff;font-weight:bold;transform-origin:0 50%;transform:scaleX(0.75);">FOOTBALL</span>
<svg style="left:480.5px;top:701.5px;" width="17.0" height="17.0" viewBox="-8.5 -8.5 17.0 17.0"><circle cx="0" cy="0" r="7.5" fill="#69b94a"/><path d="M-3 -5.500c3.500 1.500 5 4 4.500 7.500" fill="none" stroke="#d8f0c4" stroke-width="1.300"/></svg>
<span style="left:505px;top:703.12px;font-size:12.5px;line-height:15.0px;color:#555;transform-origin:0 50%;transform:scaleX(0.785);">TENNIS</span>
<span style="left:1162px;top:740.22px;font-size:11.5px;line-height:13.8px;color:#222;transform-origin:50% 50%;transform:translateX(-50%) scaleX(0.782);">1X2</span>
<span style="left:408px;top:767.39px;font-size:9.5px;line-height:11.4px;color:#222;transform-origin:50% 50%;transform:translateX(-50%) scaleX(0.881);">TIME</span>
<span style="left:443px;top:767.39px;font-size:9.5px;line-height:11.4px;color:#222;transform-origin:0 50%;transform:scaleX(0.821);">EVENT</span>
<span style="left:984px;top:766.89px;font-size:9.5px;line-height:11.4px;color:#222;transform-origin:50% 50%;transform:translateX(-50%) scaleX(0.8);">1</span>
<span style="left:1162px;top:766.89px;font-size:9.5px;line-height:11.4px;color:#222;letter-spacing:0.3px;transform-origin:50% 50%;transform:translateX(-50%) scaleX(0.78);">X-DRAW</span>
<span style="left:1339px;top:766.89px;font-size:9.5px;line-height:11.4px;color:#222;transform-origin:50% 50%;transform:translateX(-50%) scaleX(0.8);">2</span>
<span style="left:1451px;top:766.89px;font-size:9.5px;line-height:11.4px;color:#222;letter-spacing:0.3px;transform-origin:50% 50%;transform:translateX(-50%) scaleX(0.78);">MORE</span>
<div style="left:383px;top:785px;width:1088px;height:40.75px;background:#fff;"></div>
<div style="left:432px;top:785px;width:1px;height:40.75px;background:#cfcfcf;"></div>
<span style="left:406.8px;top:792.3px;font-size:10.5px;line-height:12.6px;color:#555;transform-origin:50% 50%;transform:translateX(-50%) scaleX(0.92);">02:00</span>
<span style="left:406.8px;top:805.8px;font-size:10.5px;line-height:12.6px;color:#555;transform-origin:50% 50%;transform:translateX(-50%) scaleX(0.92);">24/07</span>
<span style="left:443px;top:792.6px;font-size:10.5px;line-height:12.6px;color:#555;letter-spacing:1px;transform-origin:0 50%;transform:scaleX(0.802);">NEW YORK CITY FC  VS  INTER MIAMI CF</span>
<span style="left:443px;top:807.3px;font-size:10.5px;line-height:12.6px;color:#555;letter-spacing:0.6px;transform-origin:0 50%;transform:scaleX(0.902);">USA - Major League Soccer</span>
<svg style="left:860px;top:799.0px;" width="14" height="14" viewBox="0 0 14 14"><path d="M7 1.200l1.750 3.900 4.250.45-3.200 2.850.9 4.200L7 10.450 3.300 12.600l.9-4.200L1 5.550l4.250-.45z" fill="none" stroke="#222" stroke-width="1.200" stroke-linejoin="round"/></svg>
<svg style="left:877.5px;top:798.0px;" width="13.5" height="14" viewBox="0 0 13 13.500"><rect x=".5" y="6.500" width="2.800" height="6.500" fill="#222"/><rect x="5" y="1" width="2.800" height="12" fill="#222"/><rect x="9.500" y="5" width="2.800" height="8" fill="#222"/></svg>
<div style="left:897.5px;top:791px;width:174px;height:27.3px;background:#dedede;"></div>
<span style="left:984.5px;top:797.81px;font-size:11px;line-height:13.2px;color:#2a2a2a;letter-spacing:0.3px;transform-origin:50% 50%;transform:translateX(-50%) scaleX(0.82);">1.37</span>
<div style="left:1074.5px;top:791px;width:175px;height:27.3px;background:#dedede;"></div>
<span style="left:1162.0px;top:797.81px;font-size:11px;line-height:13.2px;color:#2a2a2a;letter-spacing:0.3px;transform-origin:50% 50%;transform:translateX(-50%) scaleX(0.82);">5.05</span>
<div style="left:1252px;top:791px;width:176px;height:27.3px;background:#dedede;"></div>
<span style="left:1340.0px;top:797.81px;font-size:11px;line-height:13.2px;color:#2a2a2a;letter-spacing:0.3px;transform-origin:50% 50%;transform:translateX(-50%) scaleX(0.82);">7.50</span>
<div style="left:1431px;top:785px;width:40px;height:40.75px;background:#fff;"></div>
<div style="left:1431px;top:785px;width:1px;height:40.75px;background:#c9c9c9;"></div>
<span style="left:1450.5px;top:791.89px;font-size:9.5px;line-height:11.4px;color:#d0d0d0;letter-spacing:0.3px;transform-origin:50% 50%;transform:translateX(-50%) scaleX(0.819);">+352</span>
<svg style="left:1442.8px;top:805.3px;" width="16.5" height="12" viewBox="0 0 14 11"><circle cx="5.500" cy="5.500" r="4.600" fill="none" stroke="#d2d2d2" stroke-width="1.200"/><path d="M9.500 2.500l4 3-4 3z" fill="#d2d2d2"/><path d="M5.500 3.300v4.400M4.300 4.500h2.200M4.300 6.500h2.200" stroke="#d2d2d2" stroke-width=".8" fill="none"/></svg>
<div style="left:383px;top:825.75px;width:1088px;height:40.75px;background:#f0f0f0;"></div>
<div style="left:432px;top:825.75px;width:1px;height:40.75px;background:#cfcfcf;"></div>
<span style="left:406.8px;top:833.05px;font-size:10.5px;line-height:12.6px;color:#555;transform-origin:50% 50%;transform:translateX(-50%) scaleX(0.92);">02:30</span>
<span style="left:406.8px;top:846.55px;font-size:10.5px;line-height:12.6px;color:#555;transform-origin:50% 50%;transform:translateX(-50%) scaleX(0.92);">24/07</span>
<span style="left:443px;top:833.35px;font-size:10.5px;line-height:12.6px;color:#555;letter-spacing:1px;transform-origin:0 50%;transform:scaleX(0.807);">FC CINCINNATI  VS  NASHVILLE SC</span>
<span style="left:443px;top:848.05px;font-size:10.5px;line-height:12.6px;color:#555;letter-spacing:0.6px;transform-origin:0 50%;transform:scaleX(0.902);">USA - Major League Soccer</span>
<svg style="left:860px;top:839.75px;" width="14" height="14" viewBox="0 0 14 14"><path d="M7 1.200l1.750 3.900 4.250.45-3.200 2.850.9 4.200L7 10.450 3.300 12.600l.9-4.200L1 5.550l4.250-.45z" fill="none" stroke="#222" stroke-width="1.200" stroke-linejoin="round"/></svg>
<svg style="left:877.5px;top:838.75px;" width="13.5" height="14" viewBox="0 0 13 13.500"><rect x=".5" y="6.500" width="2.800" height="6.500" fill="#222"/><rect x="5" y="1" width="2.800" height="12" fill="#222"/><rect x="9.500" y="5" width="2.800" height="8" fill="#222"/></svg>
<div style="left:897.5px;top:831.75px;width:174px;height:27.3px;background:#dedede;"></div>
<span style="left:984.5px;top:838.56px;font-size:11px;line-height:13.2px;color:#2a2a2a;letter-spacing:0.3px;transform-origin:50% 50%;transform:translateX(-50%) scaleX(0.82);">2.38</span>
<div style="left:1074.5px;top:831.75px;width:175px;height:27.3px;background:#dedede;"></div>
<span style="left:1162.0px;top:838.56px;font-size:11px;line-height:13.2px;color:#2a2a2a;letter-spacing:0.3px;transform-origin:50% 50%;transform:translateX(-50%) scaleX(0.82);">3.40</span>
<div style="left:1252px;top:831.75px;width:176px;height:27.3px;background:#dedede;"></div>
<span style="left:1340.0px;top:838.56px;font-size:11px;line-height:13.2px;color:#2a2a2a;letter-spacing:0.3px;transform-origin:50% 50%;transform:translateX(-50%) scaleX(0.82);">2.89</span>
<div style="left:1431px;top:825.75px;width:40px;height:40.75px;background:#f4f4f4;"></div>
<div style="left:1431px;top:825.75px;width:1px;height:40.75px;background:#c9c9c9;"></div>
<span style="left:1450.5px;top:832.64px;font-size:9.5px;line-height:11.4px;color:#d0d0d0;letter-spacing:0.3px;transform-origin:50% 50%;transform:translateX(-50%) scaleX(0.819);">+352</span>
<svg style="left:1442.8px;top:846.05px;" width="16.5" height="12" viewBox="0 0 14 11"><circle cx="5.500" cy="5.500" r="4.600" fill="none" stroke="#d2d2d2" stroke-width="1.200"/><path d="M9.500 2.500l4 3-4 3z" fill="#d2d2d2"/><path d="M5.500 3.300v4.400M4.300 4.500h2.200M4.300 6.500h2.200" stroke="#d2d2d2" stroke-width=".8" fill="none"/></svg>
<div style="left:383px;top:866.5px;width:1088px;height:40.75px;background:#fff;"></div>
<div style="left:432px;top:866.5px;width:1px;height:40.75px;background:#cfcfcf;"></div>
<span style="left:406.8px;top:873.8px;font-size:10.5px;line-height:12.6px;color:#555;transform-origin:50% 50%;transform:translateX(-50%) scaleX(0.92);">02:30</span>
<span style="left:406.8px;top:887.3px;font-size:10.5px;line-height:12.6px;color:#555;transform-origin:50% 50%;transform:translateX(-50%) scaleX(0.92);">24/07</span>
<span style="left:443px;top:874.1px;font-size:10.5px;line-height:12.6px;color:#555;letter-spacing:1px;transform-origin:0 50%;transform:scaleX(0.795);">COLUMBUS CREW  VS  NEW ENGLAND REVOLUTION</span>
<span style="left:443px;top:888.8px;font-size:10.5px;line-height:12.6px;color:#555;letter-spacing:0.6px;transform-origin:0 50%;transform:scaleX(0.902);">USA - Major League Soccer</span>
<svg style="left:860px;top:880.5px;" width="14" height="14" viewBox="0 0 14 14"><path d="M7 1.200l1.750 3.900 4.250.45-3.200 2.850.9 4.200L7 10.450 3.300 12.600l.9-4.200L1 5.550l4.250-.45z" fill="none" stroke="#222" stroke-width="1.200" stroke-linejoin="round"/></svg>
<svg style="left:877.5px;top:879.5px;" width="13.5" height="14" viewBox="0 0 13 13.500"><rect x=".5" y="6.500" width="2.800" height="6.500" fill="#222"/><rect x="5" y="1" width="2.800" height="12" fill="#222"/><rect x="9.500" y="5" width="2.800" height="8" fill="#222"/></svg>
<div style="left:897.5px;top:872.5px;width:174px;height:27.3px;background:#dedede;"></div>
<span style="left:984.5px;top:879.31px;font-size:11px;line-height:13.2px;color:#2a2a2a;letter-spacing:0.3px;transform-origin:50% 50%;transform:translateX(-50%) scaleX(0.82);">2.11</span>
<div style="left:1074.5px;top:872.5px;width:175px;height:27.3px;background:#dedede;"></div>
<span style="left:1162.0px;top:879.31px;font-size:11px;line-height:13.2px;color:#2a2a2a;letter-spacing:0.3px;transform-origin:50% 50%;transform:translateX(-50%) scaleX(0.82);">3.50</span>
<div style="left:1252px;top:872.5px;width:176px;height:27.3px;background:#dedede;"></div>
<span style="left:1340.0px;top:879.31px;font-size:11px;line-height:13.2px;color:#2a2a2a;letter-spacing:0.3px;transform-origin:50% 50%;transform:translateX(-50%) scaleX(0.82);">3.35</span>
<div style="left:1431px;top:866.5px;width:40px;height:40.75px;background:#fff;"></div>
<div style="left:1431px;top:866.5px;width:1px;height:40.75px;background:#c9c9c9;"></div>
<span style="left:1450.5px;top:873.39px;font-size:9.5px;line-height:11.4px;color:#d0d0d0;letter-spacing:0.3px;transform-origin:50% 50%;transform:translateX(-50%) scaleX(0.819);">+352</span>
<svg style="left:1442.8px;top:886.8px;" width="16.5" height="12" viewBox="0 0 14 11"><circle cx="5.500" cy="5.500" r="4.600" fill="none" stroke="#d2d2d2" stroke-width="1.200"/><path d="M9.500 2.500l4 3-4 3z" fill="#d2d2d2"/><path d="M5.500 3.300v4.400M4.300 4.500h2.200M4.300 6.500h2.200" stroke="#d2d2d2" stroke-width=".8" fill="none"/></svg>
<div style="left:383px;top:907.25px;width:1088px;height:40.75px;background:#f0f0f0;"></div>
<div style="left:432px;top:907.25px;width:1px;height:40.75px;background:#cfcfcf;"></div>
<span style="left:406.8px;top:914.55px;font-size:10.5px;line-height:12.6px;color:#555;transform-origin:50% 50%;transform:translateX(-50%) scaleX(0.92);">02:30</span>
<span style="left:406.8px;top:928.05px;font-size:10.5px;line-height:12.6px;color:#555;transform-origin:50% 50%;transform:translateX(-50%) scaleX(0.92);">24/07</span>
<span style="left:443px;top:914.85px;font-size:10.5px;line-height:12.6px;color:#555;letter-spacing:1px;transform-origin:0 50%;transform:scaleX(0.808);">ORLANDO CITY SC  VS  PHILADELPHIA UNION</span>
<span style="left:443px;top:929.55px;font-size:10.5px;line-height:12.6px;color:#555;letter-spacing:0.6px;transform-origin:0 50%;transform:scaleX(0.902);">USA - Major League Soccer</span>
<svg style="left:860px;top:921.25px;" width="14" height="14" viewBox="0 0 14 14"><path d="M7 1.200l1.750 3.900 4.250.45-3.200 2.850.9 4.200L7 10.450 3.300 12.600l.9-4.200L1 5.550l4.250-.45z" fill="none" stroke="#222" stroke-width="1.200" stroke-linejoin="round"/></svg>
<svg style="left:877.5px;top:920.25px;" width="13.5" height="14" viewBox="0 0 13 13.500"><rect x=".5" y="6.500" width="2.800" height="6.500" fill="#222"/><rect x="5" y="1" width="2.800" height="12" fill="#222"/><rect x="9.500" y="5" width="2.800" height="8" fill="#222"/></svg>
<div style="left:897.5px;top:913.25px;width:174px;height:27.3px;background:#dedede;"></div>
<span style="left:984.5px;top:920.06px;font-size:11px;line-height:13.2px;color:#2a2a2a;letter-spacing:0.3px;transform-origin:50% 50%;transform:translateX(-50%) scaleX(0.82);">2.44</span>
<div style="left:1074.5px;top:913.25px;width:175px;height:27.3px;background:#dedede;"></div>
<span style="left:1162.0px;top:920.06px;font-size:11px;line-height:13.2px;color:#2a2a2a;letter-spacing:0.3px;transform-origin:50% 50%;transform:translateX(-50%) scaleX(0.82);">3.35</span>
<div style="left:1252px;top:913.25px;width:176px;height:27.3px;background:#dedede;"></div>
<span style="left:1340.0px;top:920.06px;font-size:11px;line-height:13.2px;color:#2a2a2a;letter-spacing:0.3px;transform-origin:50% 50%;transform:translateX(-50%) scaleX(0.82);">2.85</span>
<div style="left:1431px;top:907.25px;width:40px;height:40.75px;background:#f4f4f4;"></div>
<div style="left:1431px;top:907.25px;width:1px;height:40.75px;background:#c9c9c9;"></div>
<span style="left:1450.5px;top:914.14px;font-size:9.5px;line-height:11.4px;color:#d0d0d0;letter-spacing:0.3px;transform-origin:50% 50%;transform:translateX(-50%) scaleX(0.819);">+332</span>
<svg style="left:1442.8px;top:927.55px;" width="16.5" height="12" viewBox="0 0 14 11"><circle cx="5.500" cy="5.500" r="4.600" fill="none" stroke="#d2d2d2" stroke-width="1.200"/><path d="M9.500 2.500l4 3-4 3z" fill="#d2d2d2"/><path d="M5.500 3.300v4.400M4.300 4.500h2.200M4.300 6.500h2.200" stroke="#d2d2d2" stroke-width=".8" fill="none"/></svg>
<div style="left:1476px;top:85px;width:300.29999999999995px;height:39.5px;background:#e6e6e6;"></div>
<span style="left:1484px;top:99.33px;font-size:13px;line-height:15.6px;color:#444;transform-origin:0 50%;transform:scaleX(0.757);">BETSLIP</span>
<div style="left:1476px;top:123.5px;width:300.29999999999995px;height:1.5px;background:#fafafa;"></div>
<div style="left:1476px;top:125px;width:149.5px;height:33.5px;background:#79a6dc;"></div>
<span style="left:1483.5px;top:134.62px;font-size:12.5px;line-height:15.0px;color:#fff;font-weight:bold;transform-origin:0 50%;transform:scaleX(0.755);">SINGLEBET</span>
<svg style="left:1608.5px;top:138px;" width="12" height="8" viewBox="0 0 12 8"><path d="M1.500 1.500L6 6l4.500-4.500" fill="none" stroke="#a9c7ec" stroke-width="1.600"/></svg>
<div style="left:1625.5px;top:125px;width:150.8px;height:33.5px;background:#e2e2e2;"></div>
<span style="left:1701px;top:134.62px;font-size:12.5px;line-height:15.0px;color:#444;transform-origin:50% 50%;transform:translateX(-50%) scaleX(0.787);">MY BETS</span>
<div style="left:1476px;top:158.5px;width:300.29999999999995px;height:230px;background:#f0f0f0;"></div>
<div style="left:1476px;top:158.5px;width:300.29999999999995px;height:1.5px;background:#f8f8f8;"></div>
<svg style="left:1565.5px;top:189px;" width="120" height="130" viewBox="0 0 120 130"><circle cx="60" cy="60" r="60" fill="#464646"/><path d="M23 36.100L90.200 25.600Q92.300 25.300 92.700 27.300L110.400 125H35.500L21.300 38.400Q21 36.400 23 36.100Z" fill="#f0f0f0"/><g stroke="#464646" stroke-linecap="round"><path stroke-width="4.300" d="M32.500 50.600L57 46.800M34 61.600L58.600 57M38.800 87.800L63.400 83.700M40.300 97.900L66 93.800"/><path stroke-width="2.600" d="M49.500 71.100L90.500 63.200M42.300 109.900L96.200 100.400"/></g><circle cx="84.800" cy="43.300" r="2.900" fill="#464646"/><circle cx="91.100" cy="79.900" r="2.900" fill="#464646"/><rect x="13.700" y="67.800" width="32.500" height="16" rx="8" fill="#464646" stroke="#f0f0f0" stroke-width="2.200" transform="rotate(-10 30 75.800)"/><text x="30" y="79.300" font-family="Liberation Sans, sans-serif" font-size="9.500" font-weight="bold" fill="#f0f0f0" text-anchor="middle" transform="rotate(-10 30 75.800)" textLength="23.500" lengthAdjust="spacingAndGlyphs">+2.01</text></svg>
<span style="left:1626px;top:319.86px;font-size:15.5px;line-height:18.6px;color:#333;font-weight:bold;transform-origin:50% 50%;transform:translateX(-50%) scaleX(0.905);">Empty betslip</span>
<span style="left:1626px;top:342.12px;font-size:12.5px;line-height:15.0px;color:#444;transform-origin:50% 50%;transform:translateX(-50%) scaleX(0.93);">Please make a selection to start betting</span>
<div style="left:1476px;top:388px;width:270px;height:34.5px;background:#1560bd;"></div>
<span style="left:1483.5px;top:398.12px;font-size:12.5px;line-height:15.0px;color:#fff;font-weight:bold;transform-origin:0 50%;transform:scaleX(0.757);">NEXT RACES</span>
<div style="left:1746px;top:388px;width:30.3px;height:34.5px;background:#eeeeee;"></div>
<div style="left:1746px;top:421.5px;width:30.3px;height:1.2px;background:#222;"></div>
<svg style="left:1752px;top:397px;" width="18" height="16" viewBox="0 0 18 16"><path d="M3.500 2v12M1 4.500L3.500 1.500 6 4.500M1 11.500L3.500 14.500 6 11.500" fill="none" stroke="#222" stroke-width="1.500"/><path d="M8 3h9.500M8 8h7M8 13h4" stroke="#222" stroke-width="1.600"/></svg>
<div style="left:1476px;top:422.7px;width:300.29999999999995px;height:35px;background:#fff;"></div>
<div style="left:1476px;top:422.7px;width:113px;height:35px;background:#1668cb;"></div>
<svg style="left:1481.5px;top:431px;" width="18" height="18" viewBox="0 0 20 20"><path d="M7 .5L9.200 3C14 3.500 18 7 19.500 11.500L17 14.500 13 12.500C11.500 13.500 10 14 9 14 10 16 12 17.500 14 19.500H3.500C.8 14 1 8 5 3.500z" fill="#fff"/></svg>
<span style="left:1506.5px;top:433.12px;font-size:12.5px;line-height:15.0px;color:#fff;font-weight:bold;transform-origin:0 50%;transform:scaleX(0.761);">HORSE RACING</span>
<svg style="left:1595.5px;top:431px;" width="18" height="18" viewBox="0 0 20 20"><path d="M10.500 .5L13 4l6.500 4.500-.5 1.700-5.500.3L11 13 8.500 19.500l-4-1-4-4L3 8l4-4.500z" fill="#c0802c"/></svg>
<span style="left:1620.5px;top:433.12px;font-size:12.5px;line-height:15.0px;color:#555;transform-origin:0 50%;transform:scaleX(0.753);">GREYHOUNDS</span>
<div style="left:1476px;top:457.7px;width:300.29999999999995px;height:35.5px;background:#fff;"></div>
<svg style="left:1485.5px;top:469px;" width="9" height="13" viewBox="0 0 9 13"><path d="M7 1.500L2 6.500l5 5" fill="none" stroke="#333" stroke-width="1.800"/></svg>
<div style="left:1506px;top:457.7px;width:39px;height:35.5px;background:#1668cb;"></div>
<span style="left:1524.8px;top:468.62px;font-size:12.5px;line-height:15.0px;color:#fff;font-weight:bold;transform-origin:50% 50%;transform:translateX(-50%) scaleX(0.741);">ALL</span>
<svg style="left:1553.5px;top:467.5px;" width="17" height="17" viewBox="0 0 17 17"><defs><clipPath id="us"><circle cx="8.500" cy="8.500" r="8"/></clipPath></defs><g clip-path="url(#us)"><rect width="17" height="17" fill="#f4f4f4"/><g fill="#d9607a"><rect y="2.300" width="17" height="1.600"/><rect y="5.500" width="17" height="1.600"/><rect y="8.700" width="17" height="1.600"/><rect y="11.900" width="17" height="1.600"/><rect y="15" width="17" height="1.600"/></g><rect width="9" height="8.500" fill="#4a5a9a"/></g></svg>
<span style="left:1580px;top:468.62px;font-size:12.5px;line-height:15.0px;color:#555;transform-origin:0 50%;transform:scaleX(0.778);">USA</span>
<svg style="left:1617.5px;top:467px;" width="17" height="17" viewBox="0 0 17 17"><rect x="7.300" y="0" width="2.600" height="17" fill="#e0212f"/><rect x="0" y="7.200" width="17" height="2.600" fill="#e0212f"/></svg>
<span style="left:1644.5px;top:468.62px;font-size:12.5px;line-height:15.0px;color:#555;transform-origin:0 50%;transform:scaleX(0.769);">ENGLAND</span>
<svg style="left:1709.5px;top:467.5px;" width="17" height="17" viewBox="0 0 17 17"><defs><clipPath id="wa"><circle cx="8.500" cy="8.500" r="8"/></clipPath></defs><g clip-path="url(#wa)"><rect width="17" height="8.500" fill="#f4f4f4"/><rect y="8.500" width="17" height="8.500" fill="#2f9e44"/><path d="M3 9l2-4 3 1 2-2 2 2 2-1-1 3 2 1-2 2-3-1-2 2-2-2z" fill="#d01c2a"/></g></svg>
<div style="left:1736px;top:466px;width:10px;height:20px;overflow:hidden"><span style="left:0px;top:2.62px;font-size:12.5px;line-height:15.0px;color:#555;transform-origin:0 50%;transform:scaleX(0.762);">WALES</span></div>
<svg style="left:1757px;top:469px;" width="9" height="13" viewBox="0 0 9 13"><path d="M2 1.500l5 5-5 5" fill="none" stroke="#333" stroke-width="1.800"/></svg>
<div style="left:1476px;top:493.2px;width:300.29999999999995px;height:4px;background:#f0f0f0;"></div>
<div style="left:1476px;top:497px;width:300.29999999999995px;height:341px;background:#fff;"></div>
<svg style="left:1484px;top:506px;" width="16.5" height="12.5" viewBox="0 0 33 25"><rect width="33" height="25" fill="#fff"/><rect width="33" height="8" fill="#e03c31"/><rect y="17" width="33" height="8" fill="#001489"/><path d="M0 0l14 9.500H33v6H14L0 25z" fill="#fff"/><path d="M0 2.500l13 8.500H33v3H13L0 22.500z" fill="#007749"/><path d="M0 4v17l10.500-8.500z" fill="#ffb81c"/><path d="M0 6.500v12l7.500-6z" fill="#000"/></svg>
<span style="left:1504px;top:505.62px;font-size:12.5px;line-height:15.0px;color:#555;transform-origin:0 50%;transform:scaleX(0.875);">South Africa</span>
<span style="left:1484px;top:525.03px;font-size:13.5px;line-height:16.2px;color:#333;transform-origin:0 50%;transform:scaleX(0.873);-webkit-text-stroke:.3px #333;">14:25</span>
<span style="left:1519.5px;top:525.03px;font-size:13.5px;line-height:16.2px;color:#333;transform-origin:0 50%;transform:scaleX(1.047);-webkit-text-stroke:.3px #333;">Fairview - Race 2</span>
<span style="left:1484px;top:542.1px;font-size:10px;line-height:12.0px;color:#444;letter-spacing:0.3px;transform-origin:0 50%;transform:scaleX(0.924);">E/W:1/5 of win odd,3 place</span>
<div style="left:1484px;top:558.5px;width:36px;height:16.500px;border-radius:8.500px;background:#e7e7e7"></div>
<span style="left:1502px;top:560.8px;font-size:10.5px;line-height:12.6px;color:#333;transform-origin:50% 50%;transform:translateX(-50%) scaleX(0.895);">Open</span>
<svg width="0" height="0" style="left:0;top:0"><defs><pattern id="ck" width="4.400" height="4.400" patternUnits="userSpaceOnUse" patternTransform="rotate(8)"><rect width="2.200" height="2.200" fill="#fff"/><rect x="2.200" y="2.200" width="2.200" height="2.200" fill="#fff"/></pattern></defs></svg>
<div style="left:1484px;top:586.2px;width:284px;height:1px;background:#e9e9e9;"></div>
<span style="left:1492.5px;top:597.42px;font-size:11.5px;line-height:13.8px;color:#222;font-weight:bold;transform-origin:50% 50%;transform:translateX(-50%) scaleX(0.85);">9</span>
<span style="left:1492.5px;top:611.71px;font-size:11px;line-height:13.2px;color:#555;transform-origin:50% 50%;transform:translateX(-50%) scaleX(0.55);">( )</span>
<svg style="left:1514.2px;top:608.5px;" width="22.2" height="26.2" viewBox="0 0 22 26"><path d="M4.500 8Q11 6.300 17.500 8Q21 10 21.500 16L22 24Q20.500 25.600 18.300 24.600L17.800 19.500 17.400 24.800Q11 26 4.600 24.800L4.200 19.500 3.700 24.600Q1.500 25.600 0 24L.5 16Q1 10 4.500 8Z" fill="#1c1c1c"/><path d="M4.500 8Q11 6.300 17.500 8Q21 10 21.500 16L22 24Q20.500 25.600 18.300 24.600L17.800 19.500 17.400 24.800Q11 26 4.600 24.800L4.200 19.500 3.700 24.600Q1.500 25.600 0 24L.5 16Q1 10 4.500 8Z" fill="url(#ck)" opacity=".92"/><path d="M4.500 8Q11 6.300 17.500 8Q21 10 21.500 16L22 24Q20.500 25.600 18.300 24.600L17.800 19.500 17.400 24.800Q11 26 4.600 24.800L4.200 19.500 3.700 24.600Q1.500 25.600 0 24L.5 16Q1 10 4.500 8Z" fill="none" stroke="#1c1c1c" stroke-width=".9"/><path d="M17.800 12v7.500M4.200 12v7.500" stroke="#1c1c1c" stroke-width=".8"/><ellipse cx="11.800" cy="4" rx="5" ry="3.400" fill="#222"/><path d="M4.500 6.800l4-3.300 1.500 3.800-3.500 1.200z" fill="#111"/><path d="M9.500 3h4.500M9 4.600h5" stroke="#999" stroke-width=".7"/></svg>
<span style="left:1547px;top:596.83px;font-size:12.5px;line-height:15.0px;color:#222;font-weight:bold;transform-origin:0 50%;transform:scaleX(0.856);">Echo Of Life</span>
<span style="left:1547px;top:609.8px;font-size:10.5px;line-height:12.6px;color:#555;transform-origin:0 50%;transform:scaleX(0.82);">J: --</span>
<span style="left:1547px;top:622.0px;font-size:10.5px;line-height:12.6px;color:#555;transform-origin:0 50%;transform:scaleX(0.82);">T: --</span>
<span style="left:1547px;top:634.2px;font-size:10.5px;line-height:12.6px;color:#555;transform-origin:0 50%;transform:scaleX(0.82);">R: --</span>
<div style="left:1686px;top:596.7px;width:82px;height:34px;background:#dedede;"></div>
<span style="left:1727px;top:607.03px;font-size:13px;line-height:15.6px;color:#333;font-weight:bold;letter-spacing:0.5px;transform-origin:50% 50%;transform:translateX(-50%) scaleX(0.85);">1.55</span>
<span style="left:1768px;top:634.8px;font-size:10px;line-height:12.0px;color:#666;letter-spacing:0.3px;transform-origin:100% 50%;transform:translateX(-100%) scaleX(0.936);">1.63 &gt; 1.55 &gt; 1.63</span>
<div style="left:1484px;top:654.3px;width:284px;height:1px;background:#b5b5b5;"></div>
<span style="left:1492.5px;top:665.51px;font-size:11.5px;line-height:13.8px;color:#222;font-weight:bold;transform-origin:50% 50%;transform:translateX(-50%) scaleX(0.85);">1</span>
<span style="left:1492.5px;top:679.81px;font-size:11px;line-height:13.2px;color:#555;transform-origin:50% 50%;transform:translateX(-50%) scaleX(0.55);">( )</span>
<svg style="left:1514.2px;top:676.5999999999999px;" width="22.2" height="26.2" viewBox="0 0 22 26"><path d="M4.500 8Q11 6.300 17.500 8Q21 10 21.500 16L22 24Q20.500 25.600 18.300 24.600L17.800 19.500 17.400 24.800Q11 26 4.600 24.800L4.200 19.500 3.700 24.600Q1.500 25.600 0 24L.5 16Q1 10 4.500 8Z" fill="#1c1c1c"/><path d="M4.500 8Q11 6.300 17.500 8Q21 10 21.500 16L22 24Q20.500 25.600 18.300 24.600L17.800 19.500 17.400 24.800Q11 26 4.600 24.800L4.200 19.500 3.700 24.600Q1.500 25.600 0 24L.5 16Q1 10 4.500 8Z" fill="url(#ck)" opacity=".92"/><path d="M4.500 8Q11 6.300 17.500 8Q21 10 21.500 16L22 24Q20.500 25.600 18.300 24.600L17.800 19.500 17.400 24.800Q11 26 4.600 24.800L4.200 19.500 3.700 24.600Q1.500 25.600 0 24L.5 16Q1 10 4.500 8Z" fill="none" stroke="#1c1c1c" stroke-width=".9"/><path d="M17.800 12v7.500M4.200 12v7.500" stroke="#1c1c1c" stroke-width=".8"/><ellipse cx="11.800" cy="4" rx="5" ry="3.400" fill="#222"/><path d="M4.500 6.800l4-3.300 1.500 3.800-3.500 1.200z" fill="#111"/><path d="M9.500 3h4.500M9 4.600h5" stroke="#999" stroke-width=".7"/></svg>
<span style="left:1547px;top:664.92px;font-size:12.5px;line-height:15.0px;color:#222;font-weight:bold;transform-origin:0 50%;transform:scaleX(0.857);">Rhythm Of The Rain</span>
<span style="left:1547px;top:677.9px;font-size:10.5px;line-height:12.6px;color:#555;transform-origin:0 50%;transform:scaleX(0.82);">J: --</span>
<span style="left:1547px;top:690.1px;font-size:10.5px;line-height:12.6px;color:#555;transform-origin:0 50%;transform:scaleX(0.82);">T: --</span>
<span style="left:1547px;top:702.3px;font-size:10.5px;line-height:12.6px;color:#555;transform-origin:0 50%;transform:scaleX(0.82);">R: --</span>
<div style="left:1686px;top:664.8px;width:82px;height:34px;background:#dedede;"></div>
<span style="left:1727px;top:675.13px;font-size:13px;line-height:15.6px;color:#333;font-weight:bold;letter-spacing:0.5px;transform-origin:50% 50%;transform:translateX(-50%) scaleX(0.85);">3.70</span>
<span style="left:1768px;top:702.9px;font-size:10px;line-height:12.0px;color:#666;letter-spacing:0.3px;transform-origin:100% 50%;transform:translateX(-100%) scaleX(1.013);">-- &gt; -- &gt; --</span>
<div style="left:1484px;top:722.3px;width:284px;height:1px;background:#b5b5b5;"></div>
<span style="left:1492.5px;top:733.51px;font-size:11.5px;line-height:13.8px;color:#222;font-weight:bold;transform-origin:50% 50%;transform:translateX(-50%) scaleX(0.85);">2</span>
<span style="left:1492.5px;top:747.81px;font-size:11px;line-height:13.2px;color:#555;transform-origin:50% 50%;transform:translateX(-50%) scaleX(0.55);">( )</span>
<svg style="left:1514.2px;top:744.5999999999999px;" width="22.2" height="26.2" viewBox="0 0 22 26"><path d="M4.500 8Q11 6.300 17.500 8Q21 10 21.500 16L22 24Q20.500 25.600 18.300 24.600L17.800 19.500 17.400 24.800Q11 26 4.600 24.800L4.200 19.500 3.700 24.600Q1.500 25.600 0 24L.5 16Q1 10 4.500 8Z" fill="#1c1c1c"/><path d="M4.500 8Q11 6.300 17.500 8Q21 10 21.500 16L22 24Q20.500 25.600 18.300 24.600L17.800 19.500 17.400 24.800Q11 26 4.600 24.800L4.200 19.500 3.700 24.600Q1.500 25.600 0 24L.5 16Q1 10 4.500 8Z" fill="url(#ck)" opacity=".92"/><path d="M4.500 8Q11 6.300 17.500 8Q21 10 21.500 16L22 24Q20.500 25.600 18.300 24.600L17.800 19.500 17.400 24.800Q11 26 4.600 24.800L4.200 19.500 3.700 24.600Q1.500 25.600 0 24L.5 16Q1 10 4.500 8Z" fill="none" stroke="#1c1c1c" stroke-width=".9"/><path d="M17.800 12v7.500M4.200 12v7.500" stroke="#1c1c1c" stroke-width=".8"/><ellipse cx="11.800" cy="4" rx="5" ry="3.400" fill="#222"/><path d="M4.500 6.800l4-3.300 1.500 3.800-3.500 1.200z" fill="#111"/><path d="M9.500 3h4.500M9 4.600h5" stroke="#999" stroke-width=".7"/></svg>
<span style="left:1547px;top:732.92px;font-size:12.5px;line-height:15.0px;color:#222;font-weight:bold;transform-origin:0 50%;transform:scaleX(0.876);">Mon Tresor</span>
<span style="left:1547px;top:745.9px;font-size:10.5px;line-height:12.6px;color:#555;transform-origin:0 50%;transform:scaleX(0.82);">J: --</span>
<span style="left:1547px;top:758.1px;font-size:10.5px;line-height:12.6px;color:#555;transform-origin:0 50%;transform:scaleX(0.82);">T: --</span>
<span style="left:1547px;top:770.3px;font-size:10.5px;line-height:12.6px;color:#555;transform-origin:0 50%;transform:scaleX(0.82);">R: --</span>
<div style="left:1686px;top:732.8px;width:82px;height:34px;background:#dedede;"></div>
<span style="left:1727px;top:743.13px;font-size:13px;line-height:15.6px;color:#333;font-weight:bold;letter-spacing:0.5px;transform-origin:50% 50%;transform:translateX(-50%) scaleX(0.85);">9.10</span>
<span style="left:1768px;top:770.9px;font-size:10px;line-height:12.0px;color:#666;letter-spacing:0.3px;transform-origin:100% 50%;transform:translateX(-100%) scaleX(0.936);">8.40 &gt; 9.10 &gt; 8.40</span>
<div style="left:1484px;top:790.3px;width:284px;height:1px;background:#b5b5b5;"></div>
<span style="left:1626px;top:807.92px;font-size:12px;line-height:14.4px;color:#444;transform-origin:50% 50%;transform:translateX(-50%) scaleX(0.9);">View full race</span>
</body></html>
